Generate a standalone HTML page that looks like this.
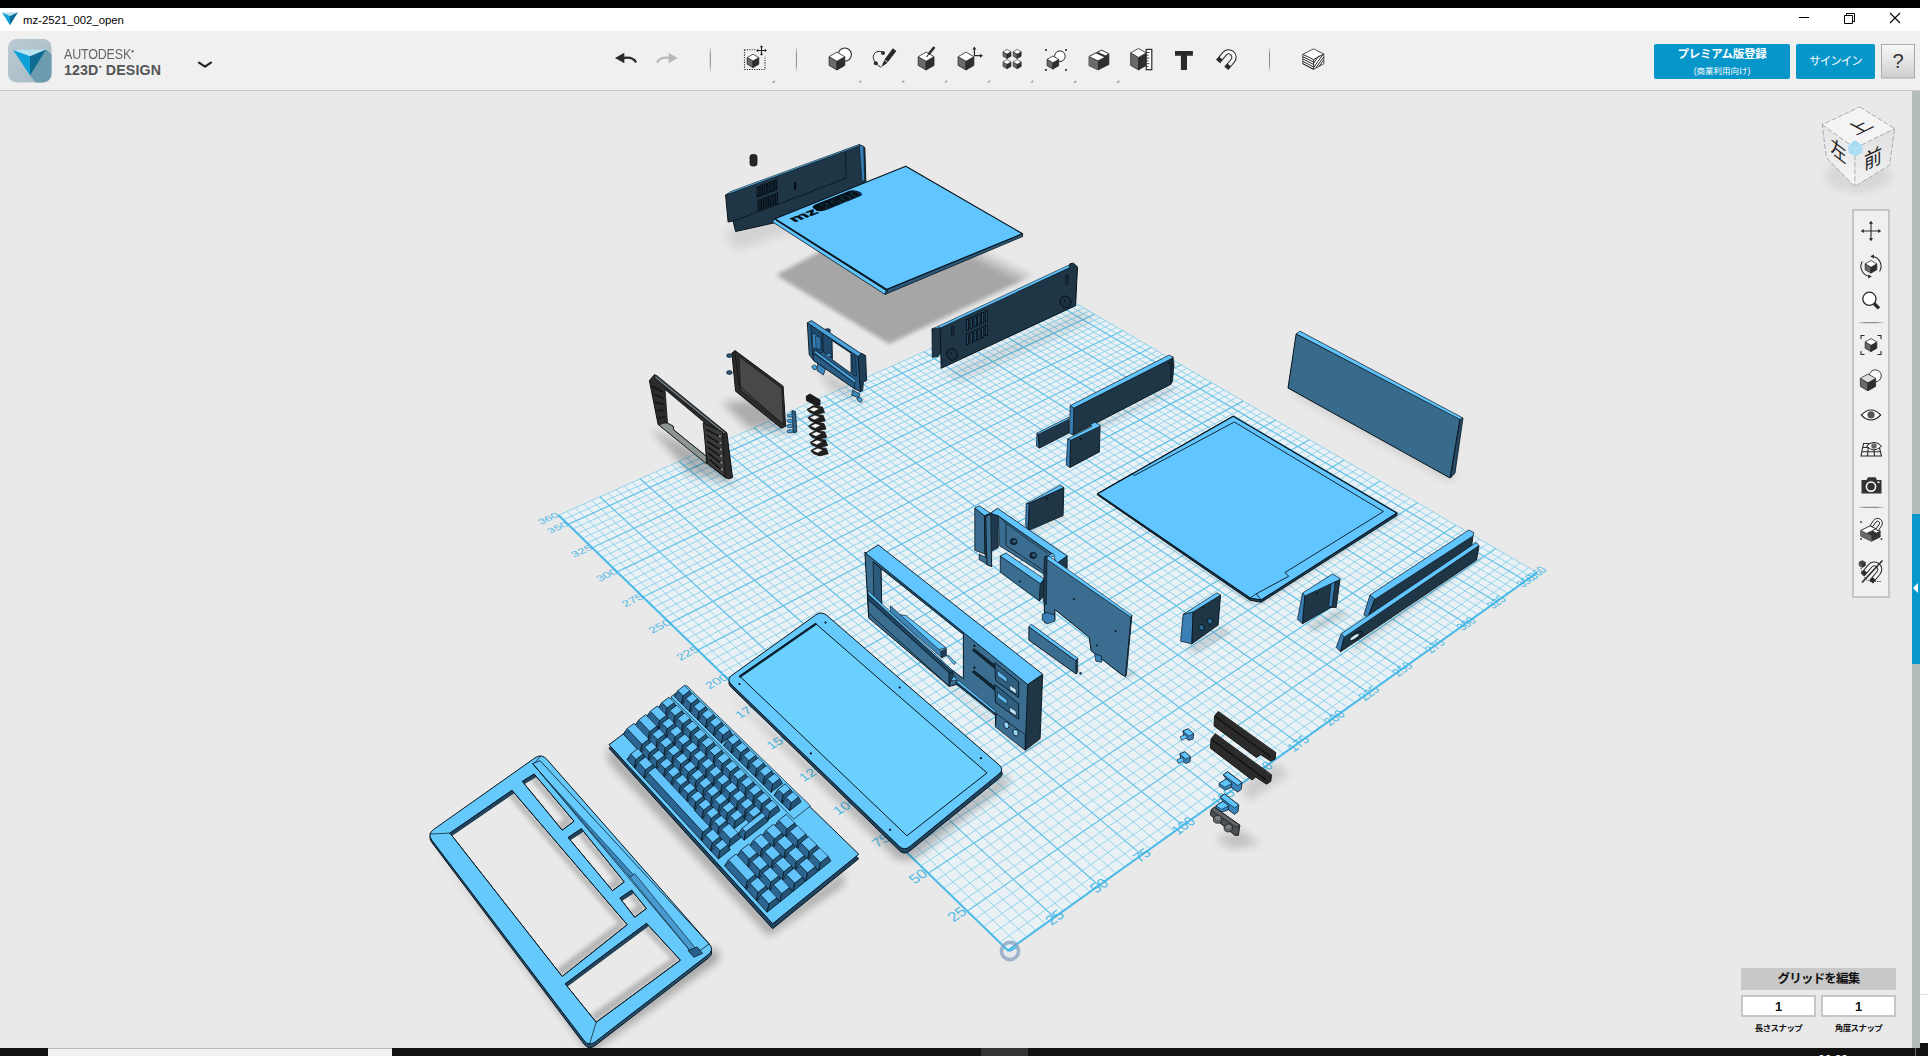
<!DOCTYPE html>
<html lang="ja"><head><meta charset="utf-8"><title>mz-2521_002_open</title>
<style>
html,body{margin:0;padding:0;background:#fff;overflow:hidden}
body{width:1928px;height:1056px;position:relative;font-family:"Liberation Sans","Noto Sans CJK JP",sans-serif}
.abs{position:absolute}
#topblack{left:0;top:0;width:1920px;height:8px;background:#000}
#titlebar{left:0;top:8px;width:1920px;height:23px;background:#fff}
#title{left:23px;top:13.4px;font-size:11.35px;color:#000;white-space:nowrap;line-height:14px}
#toolbar{left:0;top:31px;width:1920px;height:59px;background:#f0f0f0;border-bottom:1px solid #c9c9c9}
#canvas{left:0;top:91px;width:1912px;height:957px;background:#e9e9e9;overflow:hidden}
#scroll{left:1912px;top:91px;width:8px;height:957px;background:#b4bcbc}
#scrollblue{left:1912px;top:514px;width:8px;height:150px;background:#0899cc}
#bottom{left:0;top:1048px;width:1928px;height:8px;background:#111}
#brc{left:1920px;top:1043px;width:8px;height:13px;background:#111}
#tasklight{left:48px;top:1048px;width:344px;height:8px;background:#f0f0f0;border-top:1px solid #bbb;box-sizing:border-box}
#taskmid{left:981px;top:1048px;width:47px;height:8px;background:#333}
.btn{background:#0696c9;border-radius:2px;color:#fff;text-align:center;font-weight:bold}
</style></head><body>
<div class="abs" id="topblack"></div>
<div class="abs" id="titlebar"></div>
<div class="abs" id="title">mz-2521_002_open</div>
<div class="abs" id="toolbar"></div>
<div class="abs" id="canvas"></div>
<div class="abs" id="scroll"></div>
<div class="abs" id="scrollblue"></div>
<div class="abs" id="bottom"></div>
<div class="abs" id="brc"></div>
<div class="abs" id="tasklight"></div>
<div class="abs" id="taskmid"></div>
<svg class="abs" id="scene" style="left:0;top:0" width="1928" height="1056" viewBox="0 0 1928 1056">
<defs>
<clipPath id="cv"><rect x="0" y="91" width="1912" height="957"/></clipPath>
<filter id="b2" x="-20%" y="-20%" width="140%" height="140%"><feGaussianBlur stdDeviation="2"/></filter>
<filter id="b4" x="-20%" y="-20%" width="140%" height="140%"><feGaussianBlur stdDeviation="4"/></filter>
<filter id="b6" x="-20%" y="-20%" width="140%" height="140%"><feGaussianBlur stdDeviation="6"/></filter>
</defs>
<g clip-path="url(#cv)">
<polygon points="1008,950.4 1537,572.6 1056.8,292.3 558.6,515.3" fill="#e8f1f5" opacity="0.92"/>
<path d="M1017.4 943.6L567 511.6M999.7 942.3L1528.7 567.7M1026.8 937L575.3 507.8M991.5 934.4L1520.3 562.9M1036 930.4L583.5 504.1M983.4 926.5L1512.1 558.1M1045.2 923.8L591.8 500.5M975.3 918.7L1503.9 553.3M1063.3 910.9L608.1 493.2M959.4 903.2L1487.6 543.8M1072.3 904.5L616.1 489.5M951.5 895.6L1479.6 539.1M1081.2 898.1L624.2 485.9M943.7 888.1L1471.6 534.4M1090.1 891.8L632.2 482.4M936 880.6L1463.7 529.8M1107.5 879.3L648 475.3M920.8 865.9L1448 520.7M1116.2 873.2L655.9 471.8M913.3 858.6L1440.3 516.1M1124.7 867L663.7 468.3M905.8 851.4L1432.6 511.7M1133.2 861L671.4 464.8M898.4 844.3L1424.9 507.2M1150.1 848.9L686.8 457.9M883.9 830.2L1409.8 498.4M1158.4 843L694.4 454.5M876.7 823.2L1402.3 494M1166.6 837.1L702 451.1M869.5 816.3L1394.9 489.6M1174.8 831.3L709.6 447.7M862.5 809.5L1387.5 485.3M1191 819.7L724.5 441M848.5 796L1372.8 476.8M1199.1 814L731.9 437.7M841.6 789.3L1365.6 472.6M1207 808.3L739.3 434.4M834.8 782.7L1358.4 468.4M1214.9 802.6L746.7 431.1M828 776.1L1351.3 464.2M1230.6 791.5L761.2 424.6M814.7 763.2L1337.1 455.9M1238.3 786L768.4 421.4M808 756.8L1330.1 451.8M1246 780.5L775.6 418.2M801.5 750.4L1323.2 447.8M1253.6 775L782.8 415M795 744.1L1316.3 443.8M1268.7 764.3L796.9 408.6M782.2 731.7L1302.6 435.8M1276.1 758.9L803.9 405.5M775.8 725.6L1295.8 431.8M1283.6 753.6L810.9 402.4M769.5 719.5L1289.1 427.9M1290.9 748.4L817.9 399.2M763.3 713.5L1282.4 424M1305.5 738L831.7 393.1M751 701.5L1269.1 416.2M1312.7 732.8L838.5 390M744.9 695.6L1262.6 412.4M1319.8 727.7L845.3 387M738.8 689.8L1256 408.6M1327 722.6L852.1 383.9M732.9 684L1249.6 404.8M1341 712.6L865.5 377.9M721 672.5L1236.7 397.3M1348 707.6L872.1 375M715.2 666.9L1230.4 393.6M1354.9 702.7L878.8 372M709.4 661.2L1224.1 389.9M1361.8 697.8L885.3 369M703.6 655.7L1217.8 386.3M1375.4 688.1L898.4 363.2M692.2 644.6L1205.4 379M1382.1 683.2L904.9 360.3M686.6 639.2L1199.2 375.4M1388.8 678.5L911.4 357.4M681 633.8L1193.1 371.9M1395.5 673.7L917.8 354.5M675.4 628.4L1187 368.3M1408.6 664.3L930.5 348.8M664.5 617.8L1174.9 361.3M1415.1 659.7L936.8 346M659 612.5L1169 357.8M1421.6 655L943.1 343.2M653.7 607.3L1163 354.3M1428 650.5L949.4 340.4M648.3 602.2L1157.1 350.9M1440.8 641.4L961.8 334.8M637.8 591.9L1145.5 344.1M1447.1 636.9L968 332.1M632.5 586.9L1139.7 340.7M1453.4 632.4L974.1 329.3M627.4 581.9L1133.9 337.3M1459.6 627.9L980.2 326.6M622.2 576.9L1128.2 334M1471.9 619.1L992.3 321.2M612 567L1116.8 327.4M1478 614.8L998.3 318.5M607 562.2L1111.2 324.1M1484.1 610.4L1004.3 315.8M602 557.3L1105.6 320.8M1490.1 606.1L1010.2 313.1M597 552.5L1100.1 317.6M1502.1 597.6L1022 307.8M587.2 543L1089.1 311.1M1508 593.4L1027.9 305.2M582.4 538.3L1083.6 308M1513.9 589.2L1033.7 302.6M577.5 533.6L1078.2 304.8M1519.7 585L1039.5 300M572.8 529L1072.8 301.6M1531.3 576.7L1051.1 294.9M563.3 519.8L1062.1 295.4M1537 572.6L1056.8 292.3M558.6 515.3L1056.8 292.3" stroke="#72c8ea" stroke-width="0.85" fill="none" opacity="0.85"/>
<path d="M1008 950.4L558.6 515.3M1008 950.4L1537 572.6M1054.3 917.3L599.9 496.8M967.3 910.9L1495.7 548.5M1098.8 885.5L640.1 478.8M928.3 873.2L1455.8 525.2M1141.7 854.9L679.1 461.3M891.1 837.2L1417.3 502.8M1183 825.5L717.1 444.4M855.5 802.7L1380.1 481M1222.8 797L754 427.8M821.3 769.6L1344.2 460.1M1261.2 769.6L789.9 411.8M788.6 737.9L1309.4 439.7M1298.2 743.2L824.8 396.1M757.1 707.5L1275.7 420.1M1334 717.6L858.8 380.9M726.9 678.2L1243.1 401.1M1368.6 692.9L891.9 366.1M697.9 650.1L1211.6 382.6M1402.1 669L924.2 351.7M669.9 623.1L1181 364.8M1434.4 645.9L955.6 337.6M643 597L1151.3 347.5M1465.8 623.5L986.3 323.9M617.1 571.9L1122.5 330.7M1496.1 601.8L1016.2 310.5M592.1 547.8L1094.5 314.3M1525.5 580.8L1045.3 297.4M568 524.4L1067.4 298.5" stroke="#55bde6" stroke-width="1.2" fill="none" opacity="0.9"/>
<path d="M558.6,515.3 L1008,950.4 L1537,572.6" stroke="#4dbbe8" stroke-width="2" fill="none"/>
<text transform="matrix(1.814 -1.296 1.677 1.552 1054.3 917.3)" font-size="6.8" text-anchor="middle" y="2.45" fill="#3ab4e6" fill-opacity="0.9" font-family="Liberation Sans,sans-serif">25</text>
<text transform="matrix(1.875 -1.286 1.592 1.541 956.8 913.9)" font-size="6.8" text-anchor="middle" y="2.45" fill="#3ab4e6" fill-opacity="0.9" font-family="Liberation Sans,sans-serif">25</text>
<text transform="matrix(1.746 -1.247 1.686 1.494 1098.8 885.5)" font-size="6.8" text-anchor="middle" y="2.45" fill="#3ab4e6" fill-opacity="0.9" font-family="Liberation Sans,sans-serif">50</text>
<text transform="matrix(1.863 -1.229 1.522 1.473 917.8 876.2)" font-size="6.8" text-anchor="middle" y="2.45" fill="#3ab4e6" fill-opacity="0.9" font-family="Liberation Sans,sans-serif">50</text>
<text transform="matrix(1.682 -1.201 1.692 1.440 1141.7 854.9)" font-size="6.8" text-anchor="middle" y="2.45" fill="#3ab4e6" fill-opacity="0.9" font-family="Liberation Sans,sans-serif">75</text>
<text transform="matrix(1.850 -1.176 1.456 1.410 880.6 840.2)" font-size="6.8" text-anchor="middle" y="2.45" fill="#3ab4e6" fill-opacity="0.9" font-family="Liberation Sans,sans-serif">75</text>
<text transform="matrix(1.621 -1.157 1.697 1.388 1183.0 825.5)" font-size="6.8" text-anchor="middle" y="2.45" fill="#3ab4e6" fill-opacity="0.9" font-family="Liberation Sans,sans-serif">100</text>
<text transform="matrix(1.836 -1.126 1.395 1.350 845.0 805.7)" font-size="6.8" text-anchor="middle" y="2.45" fill="#3ab4e6" fill-opacity="0.9" font-family="Liberation Sans,sans-serif">100</text>
<text transform="matrix(1.563 -1.116 1.700 1.339 1222.8 797.0)" font-size="6.8" text-anchor="middle" y="2.45" fill="#3ab4e6" fill-opacity="0.9" font-family="Liberation Sans,sans-serif">125</text>
<text transform="matrix(1.822 -1.079 1.337 1.294 810.8 772.6)" font-size="6.8" text-anchor="middle" y="2.45" fill="#3ab4e6" fill-opacity="0.9" font-family="Liberation Sans,sans-serif">125</text>
<text transform="matrix(1.508 -1.077 1.702 1.292 1261.2 769.6)" font-size="6.8" text-anchor="middle" y="2.45" fill="#3ab4e6" fill-opacity="0.9" font-family="Liberation Sans,sans-serif">150</text>
<text transform="matrix(1.807 -1.035 1.283 1.242 778.1 740.9)" font-size="6.8" text-anchor="middle" y="2.45" fill="#3ab4e6" fill-opacity="0.9" font-family="Liberation Sans,sans-serif">150</text>
<text transform="matrix(1.456 -1.040 1.703 1.248 1298.2 743.2)" font-size="6.8" text-anchor="middle" y="2.45" fill="#3ab4e6" fill-opacity="0.9" font-family="Liberation Sans,sans-serif">175</text>
<text transform="matrix(1.792 -0.993 1.232 1.193 746.6 710.5)" font-size="6.8" text-anchor="middle" y="2.45" fill="#3ab4e6" fill-opacity="0.9" font-family="Liberation Sans,sans-serif">175</text>
<text transform="matrix(1.407 -1.005 1.703 1.206 1334.0 717.6)" font-size="6.8" text-anchor="middle" y="2.45" fill="#3ab4e6" fill-opacity="0.9" font-family="Liberation Sans,sans-serif">200</text>
<text transform="matrix(1.777 -0.954 1.184 1.146 716.4 681.2)" font-size="6.8" text-anchor="middle" y="2.45" fill="#3ab4e6" fill-opacity="0.9" font-family="Liberation Sans,sans-serif">200</text>
<text transform="matrix(1.360 -0.971 1.701 1.166 1368.6 692.9)" font-size="6.8" text-anchor="middle" y="2.45" fill="#3ab4e6" fill-opacity="0.9" font-family="Liberation Sans,sans-serif">225</text>
<text transform="matrix(1.762 -0.917 1.139 1.102 687.4 653.1)" font-size="6.8" text-anchor="middle" y="2.45" fill="#3ab4e6" fill-opacity="0.9" font-family="Liberation Sans,sans-serif">225</text>
<text transform="matrix(1.316 -0.939 1.699 1.129 1402.1 669.0)" font-size="6.8" text-anchor="middle" y="2.45" fill="#3ab4e6" fill-opacity="0.9" font-family="Liberation Sans,sans-serif">250</text>
<text transform="matrix(1.746 -0.883 1.096 1.061 659.4 626.1)" font-size="6.8" text-anchor="middle" y="2.45" fill="#3ab4e6" fill-opacity="0.9" font-family="Liberation Sans,sans-serif">250</text>
<text transform="matrix(1.273 -0.909 1.697 1.092 1434.4 645.9)" font-size="6.8" text-anchor="middle" y="2.45" fill="#3ab4e6" fill-opacity="0.9" font-family="Liberation Sans,sans-serif">275</text>
<text transform="matrix(1.731 -0.850 1.056 1.022 632.5 600.0)" font-size="6.8" text-anchor="middle" y="2.45" fill="#3ab4e6" fill-opacity="0.9" font-family="Liberation Sans,sans-serif">275</text>
<text transform="matrix(1.233 -0.880 1.693 1.058 1465.8 623.5)" font-size="6.8" text-anchor="middle" y="2.45" fill="#3ab4e6" fill-opacity="0.9" font-family="Liberation Sans,sans-serif">300</text>
<text transform="matrix(1.715 -0.819 1.018 0.985 606.6 574.9)" font-size="6.8" text-anchor="middle" y="2.45" fill="#3ab4e6" fill-opacity="0.9" font-family="Liberation Sans,sans-serif">300</text>
<text transform="matrix(1.195 -0.853 1.689 1.025 1496.1 601.8)" font-size="6.8" text-anchor="middle" y="2.45" fill="#3ab4e6" fill-opacity="0.9" font-family="Liberation Sans,sans-serif">325</text>
<text transform="matrix(1.700 -0.790 0.981 0.950 581.6 550.8)" font-size="6.8" text-anchor="middle" y="2.45" fill="#3ab4e6" fill-opacity="0.9" font-family="Liberation Sans,sans-serif">325</text>
<text transform="matrix(1.158 -0.827 1.685 0.994 1525.5 580.8)" font-size="6.8" text-anchor="middle" y="2.45" fill="#3ab4e6" fill-opacity="0.9" font-family="Liberation Sans,sans-serif">350</text>
<text transform="matrix(1.684 -0.762 0.947 0.917 557.5 527.4)" font-size="6.8" text-anchor="middle" y="2.45" fill="#3ab4e6" fill-opacity="0.9" font-family="Liberation Sans,sans-serif">350</text>
<text transform="matrix(1.144 -0.817 1.683 0.982 1537.0 572.6)" font-size="6.8" text-anchor="middle" y="2.45" fill="#3ab4e6" fill-opacity="0.9" font-family="Liberation Sans,sans-serif">360</text>
<text transform="matrix(1.678 -0.751 0.934 0.904 548.1 518.3)" font-size="6.8" text-anchor="middle" y="2.45" fill="#3ab4e6" fill-opacity="0.9" font-family="Liberation Sans,sans-serif">360</text>
<polygon points="725,232 790,212 800,228 735,250" fill="#000" opacity="0.1" filter="url(#b6)"/>
<polygon points="722,402 762,400 792,432 748,428" fill="#000" opacity="0.26" filter="url(#b4)"/>
<polygon points="650,428 700,452 738,485 690,474" fill="#000" opacity="0.26" filter="url(#b4)"/>
<polygon points="815,365 850,385 868,405 830,390" fill="#000" opacity="0.14" filter="url(#b4)"/>
<polygon points="945,372 1080,310 1095,318 960,382" fill="#000" opacity="0.1" filter="url(#b4)"/>
<polygon points="1290,392 1446,480 1460,478 1300,388" fill="#000" opacity="0.12" filter="url(#b4)"/>
<rect x="750" y="154.5" width="7" height="11.5" rx="2.5" fill="#262626" stroke="#111" stroke-width="0.8"/>
<polygon points="725.6,195 859.4,144.8 864.8,147.5 866,186 778,222 735.6,231.5 733.1,221 728.1,222" fill="#1f3646" stroke="#08141c" stroke-width="1" stroke-linejoin="round" />
<polygon points="725.6,195 730.5,191.6 860,144.2 859.4,145.8" fill="#61c5ff" stroke="#08141c" stroke-width="0.6" stroke-linejoin="round" />
<polygon points="859.4,145.2 863.6,146.2 864.6,180.5 861.9,181.6" fill="#3a7fb5" stroke="#08141c" stroke-width="0.6" stroke-linejoin="round" />
<polyline points="733.1,221 780,203.8 846,178 845.6,152.5" fill="none" stroke="#08141c" stroke-width="0.8" stroke-linejoin="round" stroke-linecap="round" />
<polygon points="757.2,186.8 759.3,186 759.3,196.4 757.2,197.2" fill="#16283a" stroke="#03080c" stroke-width="0.8" stroke-linejoin="round" />
<polygon points="760.7,185.5 762.8,184.7 762.8,195.1 760.7,195.9" fill="#16283a" stroke="#03080c" stroke-width="0.8" stroke-linejoin="round" />
<polygon points="764.2,184.2 766.3,183.4 766.3,193.8 764.2,194.6" fill="#16283a" stroke="#03080c" stroke-width="0.8" stroke-linejoin="round" />
<polygon points="767.7,182.9 769.8,182.1 769.8,192.5 767.7,193.3" fill="#16283a" stroke="#03080c" stroke-width="0.8" stroke-linejoin="round" />
<polygon points="771.2,181.6 773.3,180.8 773.3,191.2 771.2,192" fill="#16283a" stroke="#03080c" stroke-width="0.8" stroke-linejoin="round" />
<polygon points="774.7,180.3 776.8,179.5 776.8,189.9 774.7,190.7" fill="#16283a" stroke="#03080c" stroke-width="0.8" stroke-linejoin="round" />
<polygon points="758,200.3 760.1,199.5 760.1,209.9 758,210.7" fill="#16283a" stroke="#03080c" stroke-width="0.8" stroke-linejoin="round" />
<polygon points="761.5,199 763.6,198.2 763.6,208.6 761.5,209.4" fill="#16283a" stroke="#03080c" stroke-width="0.8" stroke-linejoin="round" />
<polygon points="765,197.7 767.1,196.9 767.1,207.3 765,208.1" fill="#16283a" stroke="#03080c" stroke-width="0.8" stroke-linejoin="round" />
<polygon points="768.5,196.4 770.6,195.6 770.6,206 768.5,206.8" fill="#16283a" stroke="#03080c" stroke-width="0.8" stroke-linejoin="round" />
<polygon points="772,195.1 774.1,194.3 774.1,204.7 772,205.5" fill="#16283a" stroke="#03080c" stroke-width="0.8" stroke-linejoin="round" />
<polygon points="775.5,193.8 777.6,193 777.6,203.4 775.5,204.2" fill="#16283a" stroke="#03080c" stroke-width="0.8" stroke-linejoin="round" />
<rect x="794" y="182" width="2.2" height="7.5" fill="#050b10"/>
<linearGradient id="tsg" gradientUnits="userSpaceOnUse" x1="996.5" y1="273.6" x2="1004.3" y2="257.4"><stop offset="0" stop-color="#a6a6a6"/><stop offset="1" stop-color="#a6a6a6" stop-opacity="0"/></linearGradient>
<polygon points="776,275 913,202 1036,274 889,344" fill="url(#tsg)" filter="url(#b2)"/>
<polygon points="772.5,221.9 775,218.8 886.9,289.4 885,294.4" fill="#61c5ff" stroke="#08141c" stroke-width="0.8" stroke-linejoin="round" />
<polygon points="885,294.4 886.9,289.4 1022.5,233.7 1022.7,236.5" fill="#2b5a7c" stroke="#08141c" stroke-width="0.8" stroke-linejoin="round" />
<polygon points="775,218.8 905.8,166.3 1022.5,233.7 886.9,289.4" fill="#61c5ff" stroke="#08141c" stroke-width="1.2" stroke-linejoin="round" />
<polyline points="776.5,220.3 887.5,291" fill="none" stroke="#08141c" stroke-width="1.2" stroke-linejoin="round" stroke-linecap="round" />
<g transform="matrix(0.93 -0.375 0.55 0.35 794.5 222.5)"><rect x="27" y="-17" width="46" height="17" rx="6" fill="#061018"/><text x="0" y="0" font-size="19" font-weight="bold" font-family="Liberation Sans,sans-serif" fill="#061018" stroke="#061018" stroke-width="0.8">mz-<tspan fill="#163040">2500</tspan></text></g>
<polygon points="932,328.8 940.3,327 940.5,353 938,356.5 932.3,357.3" fill="#1f3646" stroke="#08141c" stroke-width="0.8" stroke-linejoin="round" />
<polygon points="940.2,327.5 1069,267.5 1070,263.8 1073.5,263.2 1077.5,266.9 1075.6,305.6 941.2,368.3" fill="#1f3646" stroke="#08141c" stroke-width="1" stroke-linejoin="round" />
<polygon points="937.5,326.6 1069,265 1069.5,267.6 940.2,328" fill="#61c5ff" stroke="#08141c" stroke-width="0.6" stroke-linejoin="round" />
<polygon points="932,328.8 937.5,326.6 940.2,328" fill="#61c5ff" stroke="#08141c" stroke-width="0.5" stroke-linejoin="round" />
<ellipse cx="951.9" cy="354.4" rx="5.2" ry="6" fill="#1c3242" stroke="#050b10" stroke-width="0.8" transform="rotate(-25 951.9 354.4)"/>
<circle cx="951.1" cy="353.4" r="0.8" fill="#050b10"/>
<ellipse cx="1065.6" cy="301.9" rx="5.2" ry="6" fill="#1c3242" stroke="#050b10" stroke-width="0.8" transform="rotate(-25 1065.6 301.9)"/>
<circle cx="1064.8" cy="300.9" r="0.8" fill="#050b10"/>
<rect x="951.6" y="326.5" width="2.2" height="9.5" rx="1" fill="#1a2f3f" stroke="#050b10" stroke-width="0.6"/>
<rect x="1065.8" y="274.5" width="2.2" height="10" rx="1" fill="#1a2f3f" stroke="#050b10" stroke-width="0.6"/>
<rect x="966.3" y="319.5" width="2.3" height="10.5" fill="#234a66" stroke="#050b10" stroke-width="0.8"/>
<rect x="970.1" y="317.8" width="2.3" height="10.5" fill="#234a66" stroke="#050b10" stroke-width="0.8"/>
<rect x="973.9" y="316.0" width="2.3" height="10.5" fill="#234a66" stroke="#050b10" stroke-width="0.8"/>
<rect x="977.7" y="314.2" width="2.3" height="10.5" fill="#234a66" stroke="#050b10" stroke-width="0.8"/>
<rect x="981.5" y="312.5" width="2.3" height="10.5" fill="#234a66" stroke="#050b10" stroke-width="0.8"/>
<rect x="985.3" y="310.8" width="2.3" height="10.5" fill="#234a66" stroke="#050b10" stroke-width="0.8"/>
<rect x="966.3" y="334.0" width="2.3" height="10.5" fill="#234a66" stroke="#050b10" stroke-width="0.8"/>
<rect x="970.1" y="332.2" width="2.3" height="10.5" fill="#234a66" stroke="#050b10" stroke-width="0.8"/>
<rect x="973.9" y="330.5" width="2.3" height="10.5" fill="#234a66" stroke="#050b10" stroke-width="0.8"/>
<rect x="977.7" y="328.8" width="2.3" height="10.5" fill="#234a66" stroke="#050b10" stroke-width="0.8"/>
<rect x="981.5" y="327.0" width="2.3" height="10.5" fill="#234a66" stroke="#050b10" stroke-width="0.8"/>
<rect x="985.3" y="325.2" width="2.3" height="10.5" fill="#234a66" stroke="#050b10" stroke-width="0.8"/>
<polygon points="817.7,362.6 825.8,367.6 823.4,374.9 817,370.6" fill="#3a86bd" stroke="#08141c" stroke-width="0.7" stroke-linejoin="round" />
<polygon points="811.6,366.4 814.4,364.8 817,366.8 816,369.5 813.5,369.7" fill="#4aa3dc" stroke="#08141c" stroke-width="0.6" stroke-linejoin="round" />
<polygon points="852.8,390 859.9,394.1 858.7,397.6 851.7,395.3" fill="#3a86bd" stroke="#08141c" stroke-width="0.7" stroke-linejoin="round" />
<polygon points="856.6,398.1 860.4,397.6 862.4,400 861.3,402.4 858.7,401.7" fill="#4aa3dc" stroke="#08141c" stroke-width="0.6" stroke-linejoin="round" />
<polygon points="858,356.6 861.3,353.1 865.6,355.5 866.7,380.6 863.4,382 862.7,390.5 860.4,391.7" fill="#1f3f58" stroke="#08141c" stroke-width="0.8" stroke-linejoin="round" />
<polygon points="807.3,322.8 858,356.6 860.4,391.7 854.7,388.8 813.5,360.4 809.2,354.5" fill="#2a5d85" stroke="#08141c" stroke-width="0.9" stroke-linejoin="round" />
<polygon points="831.9,340.5 850.9,353.2 851.1,373.3 832.4,359.7" fill="#e9e9e9" stroke="#08141c" stroke-width="0.8" stroke-linejoin="round" />
<polygon points="810.6,324.4 822.5,331.4 823.4,351.9 812.5,355.3" fill="#1f4a6c" stroke="#08141c" stroke-width="0.6" stroke-linejoin="round" />
<polygon points="812.2,332.7 820.6,337.5 821.1,349.8 812.7,347.7" fill="#3a86bd" stroke="#08141c" stroke-width="0.6" stroke-linejoin="round" />
<polygon points="815.4,336.1 820.6,337.5 821.1,349.8 816,348.4" fill="#2f70a2" stroke="#08141c" stroke-width="0.5" stroke-linejoin="round" />
<polygon points="822.5,331.4 831.8,337.5 832.1,357.8 823.4,351.9" fill="#1f4a6c" stroke="#08141c" stroke-width="0.6" stroke-linejoin="round" />
<polygon points="825.3,354.5 829.6,353.8 832.1,355.5 827.7,356.9" fill="#4aa3dc" stroke="#08141c" stroke-width="0.5" stroke-linejoin="round" />
<polygon points="851.8,354.5 855.6,356.9 856.6,376.3 853,375.4" fill="#1f4a6c" stroke="#08141c" stroke-width="0.5" stroke-linejoin="round" />
<rect x="824.8" y="328.8" width="5.6" height="4" rx="1.6" fill="#1f4a6c" stroke="#08141c" stroke-width="0.6"/>
<polygon points="813,353.1 854.7,382.9 854.7,388.8 813.5,360.4" fill="#2a5d85" stroke="#08141c" stroke-width="0.7" stroke-linejoin="round" />
<polygon points="813,351.9 815.7,350.7 856.1,380.3 854.7,382.9" fill="#4aa3dc" stroke="#08141c" stroke-width="0.7" stroke-linejoin="round" />
<polygon points="807.3,322.8 811.6,320.6 861.3,353.8 858,356.6" fill="#4aa3dc" stroke="#08141c" stroke-width="0.8" stroke-linejoin="round" />
<polygon points="731.9,353.1 735,350.6 783.1,386.2 785.6,426.2 781.2,428.1 735.6,391.2" fill="#2c2c2c" stroke="#111" stroke-width="1" stroke-linejoin="round" />
<polygon points="739,356.5 781.9,388.1 783.5,424.4 740.6,390" fill="#4a4847" stroke="#151515" stroke-width="0.8" stroke-linejoin="round" />
<polyline points="735,351.9 738.8,385 780.6,422.5" fill="none" stroke="#111" stroke-width="0.8" stroke-linejoin="round" stroke-linecap="round" />
<ellipse cx="729.4" cy="355.6" rx="2.8" ry="1.9" fill="#2a5a80" stroke="#0b1a24" stroke-width="0.7"/>
<ellipse cx="729.4" cy="372.5" rx="2.8" ry="1.9" fill="#2a5a80" stroke="#0b1a24" stroke-width="0.7"/>
<polygon points="791.9,410.6 795.6,411.5 796.9,431.9 793.1,433.1" fill="#2d6187" stroke="#08141c" stroke-width="0.7" stroke-linejoin="round" />
<ellipse cx="790.0" cy="415.6" rx="3" ry="1.6" fill="#4aa3dc" stroke="#08141c" stroke-width="0.6"/>
<ellipse cx="790.0" cy="420.9" rx="3" ry="1.6" fill="#4aa3dc" stroke="#08141c" stroke-width="0.6"/>
<ellipse cx="790.0" cy="426.1" rx="3" ry="1.6" fill="#4aa3dc" stroke="#08141c" stroke-width="0.6"/>
<ellipse cx="790.0" cy="431.4" rx="3" ry="1.6" fill="#4aa3dc" stroke="#08141c" stroke-width="0.6"/>
<polygon points="649.4,380.6 654.4,374.8 726.9,433.1 732.5,477.5 728.8,478.8 725,477.5 710,465.6 658.1,424.4" fill="#2b2b2b" stroke="#101010" stroke-width="1" stroke-linejoin="round" />
<polygon points="665,389.4 703.8,421.9 706.2,456.2 673.8,430 673.1,426.2 667.5,423.1" fill="#e9e9e9" stroke="#101010" stroke-width="0.8" stroke-linejoin="round" />
<polygon points="663.8,423.1 667.5,423.1 673.1,426.2 673.8,430 706.2,456.2 706.5,463.8 658.8,425" fill="#8d9494" stroke="#101010" stroke-width="0.8" stroke-linejoin="round" />
<polygon points="654.4,374.8 656.9,375.6 726.2,432.2 726.9,433.1 723.1,433.8 655,378.8" fill="#3c4346" stroke="#101010" stroke-width="0.7" stroke-linejoin="round" />
<polyline points="655.6,377.2 724,432.8" fill="none" stroke="#9aa7ad" stroke-width="0.8" stroke-linejoin="round" stroke-linecap="round" />
<polygon points="703.1,423.1 722.5,431.9 725,476.9 707.5,463.8" fill="#3a3a3a" stroke="#101010" stroke-width="0.8" stroke-linejoin="round" />
<polyline points="706.4,429.7 718,435.7" fill="none" stroke="#111" stroke-width="1.5" stroke-linejoin="round" stroke-linecap="round" />
<circle cx="720.0" cy="436.2" r="0.9" fill="#9aa"/>
<polyline points="707,435.6 718.4,442.3" fill="none" stroke="#111" stroke-width="1.5" stroke-linejoin="round" stroke-linecap="round" />
<circle cx="720.4" cy="442.8" r="0.9" fill="#9aa"/>
<polyline points="707.7,441.6 718.8,448.9" fill="none" stroke="#111" stroke-width="1.5" stroke-linejoin="round" stroke-linecap="round" />
<circle cx="720.8" cy="449.4" r="0.9" fill="#9aa"/>
<polyline points="708.3,447.6 719.1,455.5" fill="none" stroke="#111" stroke-width="1.5" stroke-linejoin="round" stroke-linecap="round" />
<circle cx="721.1" cy="456.0" r="0.9" fill="#9aa"/>
<polyline points="709,453.6 719.5,462.1" fill="none" stroke="#111" stroke-width="1.5" stroke-linejoin="round" stroke-linecap="round" />
<circle cx="721.5" cy="462.6" r="0.9" fill="#9aa"/>
<polyline points="709.6,459.5 719.9,468.8" fill="none" stroke="#111" stroke-width="1.5" stroke-linejoin="round" stroke-linecap="round" />
<circle cx="721.9" cy="469.3" r="0.9" fill="#9aa"/>
<polyline points="652.2,386.2 662.5,391.8" fill="none" stroke="#151515" stroke-width="1.6" stroke-linejoin="round" stroke-linecap="round" />
<polyline points="653.8,394.3 662.9,398" fill="none" stroke="#151515" stroke-width="1.6" stroke-linejoin="round" stroke-linecap="round" />
<polyline points="655.4,402.4 663.4,404.2" fill="none" stroke="#151515" stroke-width="1.6" stroke-linejoin="round" stroke-linecap="round" />
<polyline points="657,410.5 663.9,410.5" fill="none" stroke="#151515" stroke-width="1.6" stroke-linejoin="round" stroke-linecap="round" />
<polyline points="658.7,418.6 664.3,416.8" fill="none" stroke="#151515" stroke-width="1.6" stroke-linejoin="round" stroke-linecap="round" />
<polygon points="806.2,396.2 810,394 820,400 820,405.2 816.2,405.6 806.5,400.6" fill="#1c1c1c" stroke="#0a0a0a" stroke-width="0.8" stroke-linejoin="round" />
<polygon points="807,409.4 813.5,405.6 822.5,407.1 824.5,412.5 816,414.6 809.8,412.5" fill="#202020" stroke="#0a0a0a" stroke-width="0.7" stroke-linejoin="round" />
<polygon points="808.5,409.4 814.1,406.9 819.5,408.8 813.8,411.9" fill="#f4f6f6" stroke="#0a0a0a" stroke-width="0.6" stroke-linejoin="round" />
<polygon points="807.8,417.6 814.2,413.9 823.2,415.4 825.2,420.8 816.8,422.9 810.5,420.8" fill="#202020" stroke="#0a0a0a" stroke-width="0.7" stroke-linejoin="round" />
<polygon points="809.2,417.6 814.9,415.1 820.2,417 814.5,420.1" fill="#f4f6f6" stroke="#0a0a0a" stroke-width="0.6" stroke-linejoin="round" />
<polygon points="808.5,425.9 815,422.1 824,423.6 826,429 817.5,431.1 811.2,429" fill="#202020" stroke="#0a0a0a" stroke-width="0.7" stroke-linejoin="round" />
<polygon points="810,425.9 815.6,423.4 821,425.2 815.2,428.4" fill="#f4f6f6" stroke="#0a0a0a" stroke-width="0.6" stroke-linejoin="round" />
<polygon points="809.2,434.1 815.8,430.4 824.8,431.9 826.8,437.2 818.2,439.4 812,437.2" fill="#202020" stroke="#0a0a0a" stroke-width="0.7" stroke-linejoin="round" />
<polygon points="810.8,434.1 816.4,431.6 821.8,433.5 816,436.6" fill="#f4f6f6" stroke="#0a0a0a" stroke-width="0.6" stroke-linejoin="round" />
<polygon points="810,442.4 816.5,438.6 825.5,440.1 827.5,445.5 819,447.6 812.8,445.5" fill="#202020" stroke="#0a0a0a" stroke-width="0.7" stroke-linejoin="round" />
<polygon points="811.5,442.4 817.1,439.9 822.5,441.8 816.8,444.9" fill="#f4f6f6" stroke="#0a0a0a" stroke-width="0.6" stroke-linejoin="round" />
<polygon points="810.8,450.6 817.2,446.9 826.2,448.4 828.2,453.8 819.8,455.9 813.5,453.8" fill="#202020" stroke="#0a0a0a" stroke-width="0.7" stroke-linejoin="round" />
<polygon points="812.2,450.6 817.9,448.1 823.2,450 817.5,453.1" fill="#f4f6f6" stroke="#0a0a0a" stroke-width="0.6" stroke-linejoin="round" />
<polygon points="1075,436.2 1171.2,386.2 1177.5,389.4 1080,440" fill="#000" opacity="0.12" filter="url(#b2)"/>
<polygon points="1036.9,433.1 1038.1,434.4 1039.4,448.1 1036.5,446.2" fill="#3a7fb5" stroke="#08141c" stroke-width="0.7" stroke-linejoin="round" />
<polygon points="1038.1,434.4 1068.8,419.4 1068.8,433.1 1039.4,448.1" fill="#1f3646" stroke="#08141c" stroke-width="0.9" stroke-linejoin="round" />
<polygon points="1036.9,433.1 1068.8,417.2 1068.8,419.4 1038.1,434.4" fill="#61c5ff" stroke="#08141c" stroke-width="0.7" stroke-linejoin="round" />
<polygon points="1171.2,358.8 1173.1,356.9 1174,365 1172.5,381.2 1170.6,384.4" fill="#1a2f3f" stroke="#08141c" stroke-width="0.7" stroke-linejoin="round" />
<polygon points="1073.8,408.1 1171.2,358.8 1170.6,384.4 1073.1,435" fill="#1f3646" stroke="#08141c" stroke-width="0.9" stroke-linejoin="round" />
<polygon points="1070.2,405.6 1168.8,355.2 1173.1,356.9 1171.2,358.8 1073.8,408.1" fill="#61c5ff" stroke="#08141c" stroke-width="0.7" stroke-linejoin="round" />
<polygon points="1070.2,405.6 1073.8,408.1 1073.1,435 1069.4,433.1" fill="#3a7fb5" stroke="#08141c" stroke-width="0.7" stroke-linejoin="round" />
<circle cx="1168.8" cy="363.1" r="0.9" fill="#050b10"/>
<polygon points="1067.8,438.8 1070.6,440 1070,467.5 1066.2,465" fill="#3a7fb5" stroke="#08141c" stroke-width="0.7" stroke-linejoin="round" />
<polygon points="1070.6,440 1100,425.6 1099.4,451.9 1070,467.5" fill="#1f3646" stroke="#08141c" stroke-width="0.9" stroke-linejoin="round" />
<polygon points="1067.8,438.8 1091.9,426.5 1090.6,424.4 1095,422.1 1100.6,425.6 1100,426.2 1070.6,440.2" fill="#61c5ff" stroke="#08141c" stroke-width="0.7" stroke-linejoin="round" />
<circle cx="1081.0" cy="439.0" r="0.9" fill="#050b10"/>
<polygon points="1460,418.8 1463,418 1455,473 1450.5,478" fill="#244a68" stroke="#08141c" stroke-width="0.8" stroke-linejoin="round" />
<polygon points="1296.2,333.8 1460,418.8 1450,478 1288,388" fill="#386a8c" stroke="#08141c" stroke-width="1" stroke-linejoin="round" />
<polygon points="1296.2,333.8 1300,331.2 1463,418 1460,419.5" fill="#61c5ff" stroke="#08141c" stroke-width="0.7" stroke-linejoin="round" />
<polygon points="1100,497 1250,602 1262,604 1400,516 1396,512 1258,596" fill="#000" opacity="0.18" filter="url(#b2)"/>
<polygon points="1097.5,495 1250,600.2 1261.2,602.2 1396.9,515.3 1396.9,513.1 1233.2,416.2 1097.5,493.8" fill="#1f4560" stroke="#08141c" stroke-width="1" stroke-linejoin="round" />
<polygon points="1233.2,416.2 1396.9,513.1 1261.2,600 1250,598 1097.5,493.8" fill="#61c5ff" stroke="#08141c" stroke-width="1.2" stroke-linejoin="round" />
<polyline points="1102,491 1132.5,473.5 1134.2,475.6 1234.3,422 1383.5,511.5 1285,572.5 1288.7,576.3 1256.3,593.8 1261.2,600" fill="none" stroke="#08141c" stroke-width="0.9" stroke-linejoin="round" stroke-linecap="round" />
<polyline points="1250,598 1256.3,593.8" fill="none" stroke="#08141c" stroke-width="0.8" stroke-linejoin="round" stroke-linecap="round" />
<polygon points="1030,531.2 1063.8,516.2 1067.5,518.1 1032.5,533.8" fill="#000" opacity="0.12" filter="url(#b2)"/>
<polygon points="1026.2,503.8 1029.4,503.1 1028.1,530.6 1025.6,525" fill="#3a7fb5" stroke="#08141c" stroke-width="0.7" stroke-linejoin="round" />
<polygon points="1029.4,503.1 1063.8,487.5 1063.1,515.6 1028.1,530.6" fill="#1f3646" stroke="#08141c" stroke-width="0.9" stroke-linejoin="round" />
<polygon points="1026.2,503.8 1060.6,485 1063.8,487.5 1029.4,503.1" fill="#61c5ff" stroke="#08141c" stroke-width="0.7" stroke-linejoin="round" />
<circle cx="1046.9" cy="498.5" r="0.9" fill="#050b10"/>
<polygon points="1186,648 1220,626 1232,632 1196,654" fill="#000" opacity="0.12" filter="url(#b2)"/>
<polygon points="1183.1,614.4 1193.1,611.9 1191.9,643.8 1180.6,641.2" fill="#3a7fb5" stroke="#08141c" stroke-width="0.7" stroke-linejoin="round" />
<polygon points="1193.1,611.9 1220.6,595 1218.1,625 1191.9,643.8" fill="#1f3646" stroke="#08141c" stroke-width="0.9" stroke-linejoin="round" />
<polygon points="1183.1,614.4 1216.9,592.8 1220.6,595 1193.1,611.9" fill="#61c5ff" stroke="#08141c" stroke-width="0.7" stroke-linejoin="round" />
<ellipse cx="1201.5" cy="627.5" rx="2.6" ry="3" fill="#2a6795" stroke="#050b10" stroke-width="0.8" transform="rotate(-30 1201.5 627.5)"/>
<ellipse cx="1210.0" cy="621.2" rx="2.6" ry="3" fill="#2a6795" stroke="#050b10" stroke-width="0.8" transform="rotate(-30 1210.0 621.2)"/>
<circle cx="1203.5" cy="607.5" r="0.8" fill="#050b10"/>
<polygon points="1305,626 1338,609 1350,614 1315,632" fill="#000" opacity="0.12" filter="url(#b2)"/>
<polygon points="1302.5,593.1 1305,595.6 1302.5,623.8 1297.5,619.4" fill="#3a7fb5" stroke="#08141c" stroke-width="0.7" stroke-linejoin="round" />
<polygon points="1305,595.6 1334.4,581.9 1330.6,607.5 1302.5,623.8" fill="#1f3646" stroke="#08141c" stroke-width="0.9" stroke-linejoin="round" />
<polygon points="1334.4,581.9 1340,579.4 1336.2,607.5 1330.6,607.5" fill="#1f3646" stroke="#08141c" stroke-width="0.8" stroke-linejoin="round" />
<polygon points="1331.2,583.1 1335,581.9 1331.9,606.9 1328.8,606.2" fill="#3a7fb5" stroke="#08141c" stroke-width="0.6" stroke-linejoin="round" />
<polygon points="1302.5,593.1 1332.5,574 1340.6,578.8 1340,579.6 1334.4,582.1 1305,595.9" fill="#61c5ff" stroke="#08141c" stroke-width="0.7" stroke-linejoin="round" />
<circle cx="1316.9" cy="593.1" r="0.8" fill="#050b10"/>
<polygon points="1372.5,618.8 1472.5,552.5 1482.5,557.5 1350,655" fill="#000" opacity="0.12" filter="url(#b2)"/>
<polygon points="1370,595 1375,598.8 1368,617 1363.8,615" fill="#3a7fb5" stroke="#08141c" stroke-width="0.7" stroke-linejoin="round" />
<polygon points="1375,598.8 1473,535.5 1471.2,550 1368,617" fill="#1f3646" stroke="#08141c" stroke-width="0.9" stroke-linejoin="round" />
<polygon points="1370,595 1468.8,530 1473.8,532.5 1473,536 1375,599.2" fill="#61c5ff" stroke="#08141c" stroke-width="0.7" stroke-linejoin="round" />
<polygon points="1341.2,633.8 1344.5,636.5 1340.5,651.8 1336.2,647.5" fill="#3a7fb5" stroke="#08141c" stroke-width="0.7" stroke-linejoin="round" />
<polygon points="1344.5,636.5 1479,546 1476.5,560 1340.5,651.8" fill="#1f3646" stroke="#08141c" stroke-width="0.9" stroke-linejoin="round" />
<polygon points="1341.2,633.8 1476.2,542.5 1479,545.5 1344.5,637" fill="#61c5ff" stroke="#08141c" stroke-width="0.7" stroke-linejoin="round" />
<ellipse cx="1356" cy="636" rx="7.5" ry="2.6" fill="#203748" stroke="#050b10" stroke-width="0.8" transform="rotate(-33 1356 636)"/>
<ellipse cx="1354.5" cy="637" rx="5.5" ry="1.8" fill="#cfe9f7" stroke="#050b10" stroke-width="0.6" transform="rotate(-33 1354.5 637)"/>
<polygon points="1119.8,674.6 1126.5,679.4 1137,673.6 1132.2,669.8" fill="#000" opacity="0.12" filter="url(#b2)"/>
<polygon points="974.8,508.2 979.2,505.7 990.7,513.3 984.4,515.8" fill="#61c5ff" stroke="#08141c" stroke-width="0.7" stroke-linejoin="round" />
<polygon points="974.8,508.2 984.4,515.8 985,554.1 974.8,550.3" fill="#3a6d90" stroke="#08141c" stroke-width="0.8" stroke-linejoin="round" />
<polygon points="984.4,515.8 990.7,513.3 997.4,509.1 998.3,547.4 991.6,551.2 991.6,566.5 986.9,564.6 985,554.1" fill="#1f3a4e" stroke="#08141c" stroke-width="0.8" stroke-linejoin="round" />
<polygon points="985.9,516.8 990.7,513.9 991.6,566.5 986.9,564.6" fill="#3a6d90" stroke="#08141c" stroke-width="0.7" stroke-linejoin="round" />
<polygon points="979.2,554.1 986.9,557.9 986.9,564.2 979.2,559.8" fill="#3a6d90" stroke="#08141c" stroke-width="0.7" stroke-linejoin="round" />
<polygon points="998.3,515.8 1051.9,554.1 1045.2,556.9 1044.2,574.2 999.3,545.5" fill="#3a6d90" stroke="#08141c" stroke-width="0.8" stroke-linejoin="round" />
<polyline points="1006,523.5 1006,545.5 1043.3,570.3" fill="none" stroke="#08141c" stroke-width="0.7" stroke-linejoin="round" stroke-linecap="round" />
<polyline points="1001.2,518.7 1006,523.5 1047.1,553.1" fill="none" stroke="#08141c" stroke-width="0.6" stroke-linejoin="round" stroke-linecap="round" />
<ellipse cx="1013.6" cy="541.6" rx="3.4" ry="3" fill="#14283a" stroke="#050b10" stroke-width="0.8"/>
<ellipse cx="1014.4" cy="541.3" rx="2" ry="1.8" fill="#2d5a7c"/>
<ellipse cx="1033.2" cy="555.4" rx="3.4" ry="3" fill="#14283a" stroke="#050b10" stroke-width="0.8"/>
<ellipse cx="1034.0" cy="555.1" rx="2" ry="1.8" fill="#2d5a7c"/>
<polygon points="990.7,513.3 997.4,508.2 1067.2,556 1056.7,563.6 1052.9,554.1 998.3,515.8" fill="#61c5ff" stroke="#08141c" stroke-width="0.8" stroke-linejoin="round" />
<polygon points="1052.9,553.1 1046.2,556.9 1047.1,559.2 1054.8,555.4" fill="#61c5ff" stroke="#08141c" stroke-width="0.6" stroke-linejoin="round" />
<polygon points="1056.7,563.6 1067.2,556 1067.2,568.4 1062.4,566.5" fill="#1f3a4e" stroke="#08141c" stroke-width="0.7" stroke-linejoin="round" />
<polygon points="1000.3,556 1040.4,583.7 1039.5,600.9 1000.3,572.2" fill="#3a6d90" stroke="#08141c" stroke-width="0.8" stroke-linejoin="round" />
<polygon points="1000.3,556 1006,553.1 1044.2,578.9 1040.4,583.7" fill="#61c5ff" stroke="#08141c" stroke-width="0.7" stroke-linejoin="round" />
<polygon points="1040.4,583.7 1044.2,578.9 1043.3,597.1 1039.5,600.9" fill="#1f3a4e" stroke="#08141c" stroke-width="0.7" stroke-linejoin="round" />
<circle cx="1020.0" cy="581.4" r="0.9" fill="#050b10"/>
<polygon points="1046.2,558.9 1131.3,617.2 1125.5,676.5 1120.8,674 1091.1,650.7 1089.2,637.3 1054.8,609.5 1054.8,620.1 1044.8,622.9 1044.2,602.9" fill="#3a6d90" stroke="#08141c" stroke-width="1" stroke-linejoin="round" />
<polygon points="1046.2,558.9 1049,556 1131.9,615.3 1131.3,617.6" fill="#61c5ff" stroke="#08141c" stroke-width="0.6" stroke-linejoin="round" />
<polygon points="1131.3,617.2 1131.9,615.3 1126.5,674.6 1125.5,676.5" fill="#2a5272" stroke="#08141c" stroke-width="0.6" stroke-linejoin="round" />
<polygon points="1044.2,556.9 1047.1,556 1046.2,604.8 1043.3,601.9" fill="#1f3a4e" stroke="#08141c" stroke-width="0.6" stroke-linejoin="round" />
<circle cx="1073.9" cy="599.0" r="0.9" fill="#050b10"/>
<circle cx="1115.6" cy="631.2" r="0.9" fill="#050b10"/>
<circle cx="1096.8" cy="645.3" r="0.9" fill="#050b10"/>
<polygon points="1042.3,614.3 1047.1,612.4 1054.8,615.3 1054.8,621 1047.1,623.9 1042.3,620.1" fill="#3a7fb5" stroke="#08141c" stroke-width="0.7" stroke-linejoin="round" />
<polygon points="1094.6,653.5 1101.6,656.4 1101.6,662.1 1095.9,661.2" fill="#3a7fb5" stroke="#08141c" stroke-width="0.7" stroke-linejoin="round" />
<polygon points="1029.9,641.1 1076.8,674.6 1081.5,671.7 1035.6,639.2" fill="#000" opacity="0.12" filter="url(#b2)"/>
<polygon points="1028.9,626.8 1076.2,660.8 1076.2,674 1028.9,640.2" fill="#3a6d90" stroke="#08141c" stroke-width="0.9" stroke-linejoin="round" />
<polygon points="1028.9,626.8 1031.4,624.3 1077.7,658.3 1076.2,660.8" fill="#61c5ff" stroke="#08141c" stroke-width="0.7" stroke-linejoin="round" />
<polygon points="1076.2,660.8 1077.7,658.3 1077.7,671.3 1076.2,674" fill="#1f3a4e" stroke="#08141c" stroke-width="0.6" stroke-linejoin="round" />
<circle cx="1080.6" cy="673.2" r="1.2" fill="#1f3a4e"/>
<polygon points="868,617.5 1025.2,752.2 1041.9,741.2 1039.3,737.3 1025.2,747.6" fill="#000" opacity="0.16" filter="url(#b2)"/>
<polygon points="894.7,614.1 905.9,615.5 946,647.8 936,650.3 902.4,618.8" fill="#61c5ff" stroke="#08141c" stroke-width="0.7" stroke-linejoin="round" />
<polygon points="890.5,605.8 940.7,651.2 941.7,657.9 890.5,612" fill="#3f86b8" stroke="#08141c" stroke-width="0.6" stroke-linejoin="round" />
<polygon points="940.7,651.2 946.4,648.4 946.4,655.5 941.7,657.9" fill="#1f3f58" stroke="#08141c" stroke-width="0.6" stroke-linejoin="round" />
<polygon points="946.4,655.5 949.2,656 955.9,663.1 954,664.5" fill="#61c5ff" stroke="#08141c" stroke-width="0.6" stroke-linejoin="round" />
<path d="M864.9 552.0 L1029.7 683.8 L1025.7 749.7 L995.4 725.5 L995.6 714.7 L956.8 684.4 L949.2 686.3 L868.7 617.9 Z M880.9 568.4 L963.4 634.3 L963.4 678.7 L951.1 669.2 L875.7 604.1 L881.7 604.1 Z" fill="#3a6d90" stroke="#08141c" stroke-width="1" fill-rule="evenodd" stroke-linejoin="round"/>
<polygon points="873.1,561.6 880.9,568.4 881.7,604.1 874,602.9" fill="#2d5a7c" stroke="#08141c" stroke-width="0.7" stroke-linejoin="round" />
<polygon points="873.1,561.6 963.6,632.2 963.6,634.3 880.9,568.6" fill="#2d5a7c" stroke="#08141c" stroke-width="0.5" stroke-linejoin="round" />
<polygon points="868,590.5 951.1,669.2 953,672.6 868,594.3" fill="#5bbcf3" stroke="#08141c" stroke-width="0.6" stroke-linejoin="round" />
<polygon points="868,594.3 953,672.6 949.2,673 868,599.5" fill="#1f4560" stroke="#08141c" stroke-width="0.6" stroke-linejoin="round" />
<polygon points="868,599.5 949.2,673 949.2,686.3 868.8,613.4" fill="#3a6d90" stroke="#08141c" stroke-width="0.8" stroke-linejoin="round" />
<polygon points="949.2,673 953,672.6 954,675.9 951.1,680.6 949.2,686.3" fill="#1f3f58" stroke="#08141c" stroke-width="0.6" stroke-linejoin="round" />
<polygon points="951.1,680.6 954,675.9 956.8,680.6" fill="#5bbcf3" stroke="#08141c" stroke-width="0.5" stroke-linejoin="round" />
<polygon points="955.9,681.6 958.7,680.6 995.6,710.9 995.6,713.8" fill="#5bbcf3" stroke="#08141c" stroke-width="0.6" stroke-linejoin="round" />
<polygon points="955.9,682.5 995.6,713.8 995.5,715.8 956.8,684.6" fill="#1f4560" stroke="#08141c" stroke-width="0.6" stroke-linejoin="round" />
<polygon points="1027.7,684.5 1042.7,674.2 1040.1,738.6 1025.2,750.2" fill="#1f3646" stroke="#08141c" stroke-width="0.9" stroke-linejoin="round" />
<polygon points="865.5,553.1 878.3,544.9 1042.7,674.2 1027.7,684.5" fill="#61c5ff" stroke="#08141c" stroke-width="0.9" stroke-linejoin="round" />
<polygon points="972.4,650.2 974.2,648.7 995.5,665.7 994.5,668.3" fill="#14283a" stroke="#050b10" stroke-width="0.7" stroke-linejoin="round" />
<circle cx="974.4" cy="645.8" r="1.1" fill="#050b10"/>
<polygon points="994.8,662.6 1018.7,681.9 1018.7,697.4 995.5,680.6" fill="#2f5f80" stroke="#050b10" stroke-width="0.8" stroke-linejoin="round" />
<polygon points="997.3,670.3 1007.1,678 1007.1,682.7 997.3,675.5" fill="#5fb6ea" stroke="#050b10" stroke-width="0.6" stroke-linejoin="round" />
<polygon points="1009.7,685 1016.2,689.6 1016.2,694 1009.7,689.6" fill="#bfe6fa" stroke="#050b10" stroke-width="0.6" stroke-linejoin="round" />
<polygon points="972.4,672.1 974.2,670.6 995.5,687.6 994.5,690.2" fill="#14283a" stroke="#050b10" stroke-width="0.7" stroke-linejoin="round" />
<circle cx="974.4" cy="667.7" r="1.1" fill="#050b10"/>
<polygon points="994.8,684.5 1018.7,703.8 1018.7,719.3 995.5,702.5" fill="#2f5f80" stroke="#050b10" stroke-width="0.8" stroke-linejoin="round" />
<polygon points="997.3,692.2 1007.1,699.9 1007.1,704.6 997.3,697.4" fill="#5fb6ea" stroke="#050b10" stroke-width="0.6" stroke-linejoin="round" />
<polygon points="1009.7,706.9 1016.2,711.5 1016.2,715.9 1009.7,711.5" fill="#bfe6fa" stroke="#050b10" stroke-width="0.6" stroke-linejoin="round" />
<polygon points="996.3,713.6 1025.2,734.7 1025.2,750.2 995.5,727" fill="#3a6d90" stroke="#08141c" stroke-width="0.7" stroke-linejoin="round" />
<ellipse cx="1006.4" cy="725.2" rx="2.6" ry="3.4" fill="#8fd3f7" stroke="#050b10" stroke-width="0.8" transform="rotate(-20 1006.4 725.2)"/>
<ellipse cx="1015.6" cy="732.7" rx="2.6" ry="3.4" fill="#8fd3f7" stroke="#050b10" stroke-width="0.8" transform="rotate(-20 1015.6 732.7)"/>
<polygon points="721.4,686.1 897.6,859.7 913.6,859.7 1009.7,782.3 1007.1,774.2 902.9,846.3" fill="#000" opacity="0.25" filter="url(#b4)"/>
<path d="M731.2 687.3 Q726.2 682.4 731.8 678.3 L815.8 617.6 Q821.5 613.5 826.8 618.1 L999.7 769.1 Q1004.9 773.7 999.5 778.1 L909.7 851.0 Q904.3 855.4 899.3 850.5 Z" fill="#1f4560" stroke="#08141c" stroke-width="1" stroke-linejoin="round"/>
<path d="M731.2 684.3 Q726.2 679.5 731.8 675.4 L815.8 614.9 Q821.5 610.8 826.8 615.4 L999.1 764.9 Q1004.4 769.4 999.0 773.9 L909.7 846.7 Q904.3 851.1 899.2 846.3 Z" fill="#66c9fc" stroke="#08141c" stroke-width="1" stroke-linejoin="round"/>
<polygon points="739.5,676 815.4,623.4 987,772.9 906.9,835.7" fill="#6ad1ff" stroke="#08141c" stroke-width="1" stroke-linejoin="round" />
<polyline points="740.1,676.5 815.6,624.2" fill="none" stroke="#0b2030" stroke-width="2.2" stroke-linejoin="round" stroke-linecap="round" />
<circle cx="825.5" cy="622.6" r="1.1" fill="#061018"/>
<circle cx="739.5" cy="684.0" r="1.1" fill="#061018"/>
<circle cx="899.7" cy="687.5" r="1.1" fill="#061018"/>
<circle cx="810.8" cy="753.4" r="1.1" fill="#061018"/>
<circle cx="980.9" cy="758.2" r="1.1" fill="#061018"/>
<circle cx="890.1" cy="829.8" r="1.1" fill="#061018"/>
<polygon points="609,744.7 772.6,923.7 845,871.5 843.1,885.3 768.9,936.1 607.9,760.7" fill="#000" opacity="0.28" filter="url(#b4)"/>
<polygon points="686.3,688.7 609,748.2 772.6,928.7 858.8,858.7" fill="#1f4560" stroke="#08141c" stroke-width="1" stroke-linejoin="round" />
<polygon points="686.3,686.7 858.8,854.2 772.6,923.7 609,744.7" fill="#66c9fc" stroke="#08141c" stroke-width="1" stroke-linejoin="round" />
<polygon points="686.3,685.2 810.5,805.8 793.8,819.1 670.8,696.8" fill="#66c9fc" stroke="#08141c" stroke-width="0.7" stroke-linejoin="round" />
<polygon points="674.1,696.2 681.6,703.7 683.1,695.8 677.9,690.6" fill="#2c6592" stroke="#08141c" stroke-width="0.8" stroke-linejoin="round" />
<polygon points="692.3,695.7 681.6,703.7 683.1,695.8 689.7,690.8" fill="#245478" stroke="#08141c" stroke-width="0.8" stroke-linejoin="round" />
<polygon points="684.7,688.3 674.1,696.2 677.9,690.6 684.4,685.6" fill="#3f7fb0" stroke="#08141c" stroke-width="0.5" stroke-linejoin="round" />
<polygon points="684.4,685.6 689.7,690.8 683.1,695.8 677.9,690.6" fill="#62c4fa" stroke="#08141c" stroke-width="0.6" stroke-linejoin="round" />
<polygon points="682,704.1 689.6,711.6 691.1,703.6 685.9,698.4" fill="#2c6592" stroke="#08141c" stroke-width="0.8" stroke-linejoin="round" />
<polygon points="700.3,703.5 689.6,711.6 691.1,703.6 697.7,698.6" fill="#245478" stroke="#08141c" stroke-width="0.8" stroke-linejoin="round" />
<polygon points="692.7,696.1 682,704.1 685.9,698.4 692.5,693.5" fill="#3f7fb0" stroke="#08141c" stroke-width="0.5" stroke-linejoin="round" />
<polygon points="692.5,693.5 697.7,698.6 691.1,703.6 685.9,698.4" fill="#62c4fa" stroke="#08141c" stroke-width="0.6" stroke-linejoin="round" />
<polygon points="658.2,708.1 665.7,715.7 667.2,707.7 662,702.5" fill="#2c6592" stroke="#08141c" stroke-width="0.8" stroke-linejoin="round" />
<polygon points="676.7,707.4 665.7,715.7 667.2,707.7 674.2,702.5" fill="#245478" stroke="#08141c" stroke-width="0.8" stroke-linejoin="round" />
<polygon points="669.2,699.9 658.2,708.1 662,702.5 669,697.3" fill="#3f7fb0" stroke="#08141c" stroke-width="0.5" stroke-linejoin="round" />
<polygon points="669,697.3 674.2,702.5 667.2,707.7 662,702.5" fill="#62c4fa" stroke="#08141c" stroke-width="0.6" stroke-linejoin="round" />
<polygon points="690,712 697.6,719.5 699.1,711.5 693.8,706.3" fill="#2c6592" stroke="#08141c" stroke-width="0.8" stroke-linejoin="round" />
<polygon points="708.3,711.3 697.6,719.5 699.1,711.5 705.8,706.5" fill="#245478" stroke="#08141c" stroke-width="0.8" stroke-linejoin="round" />
<polygon points="700.7,703.9 690,712 693.8,706.3 700.5,701.3" fill="#3f7fb0" stroke="#08141c" stroke-width="0.5" stroke-linejoin="round" />
<polygon points="700.5,701.3 705.8,706.5 699.1,711.5 693.8,706.3" fill="#62c4fa" stroke="#08141c" stroke-width="0.6" stroke-linejoin="round" />
<polygon points="666.1,716.1 673.6,723.7 675.1,715.7 669.9,710.5" fill="#2c6592" stroke="#08141c" stroke-width="0.8" stroke-linejoin="round" />
<polygon points="684.7,715.3 673.6,723.7 675.1,715.7 682.1,710.4" fill="#245478" stroke="#08141c" stroke-width="0.8" stroke-linejoin="round" />
<polygon points="677.1,707.8 666.1,716.1 669.9,710.5 676.9,705.2" fill="#3f7fb0" stroke="#08141c" stroke-width="0.5" stroke-linejoin="round" />
<polygon points="676.9,705.2 682.1,710.4 675.1,715.7 669.9,710.5" fill="#62c4fa" stroke="#08141c" stroke-width="0.6" stroke-linejoin="round" />
<polygon points="646.6,716.8 657.9,728.5 659.5,720.5 650.4,711.2" fill="#2c6592" stroke="#08141c" stroke-width="0.8" stroke-linejoin="round" />
<polygon points="669,720.2 657.9,728.5 659.5,720.5 666.5,715.3" fill="#245478" stroke="#08141c" stroke-width="0.8" stroke-linejoin="round" />
<polygon points="657.6,708.6 646.6,716.8 650.4,711.2 657.4,706" fill="#3f7fb0" stroke="#08141c" stroke-width="0.5" stroke-linejoin="round" />
<polygon points="657.4,706 666.5,715.3 659.5,720.5 650.4,711.2" fill="#62c4fa" stroke="#08141c" stroke-width="0.6" stroke-linejoin="round" />
<polygon points="698,719.9 705.5,727.4 707.1,719.4 701.8,714.2" fill="#2c6592" stroke="#08141c" stroke-width="0.8" stroke-linejoin="round" />
<polygon points="716.4,719.2 705.5,727.4 707.1,719.4 713.8,714.3" fill="#245478" stroke="#08141c" stroke-width="0.8" stroke-linejoin="round" />
<polygon points="708.7,711.7 698,719.9 701.8,714.2 708.5,709.1" fill="#3f7fb0" stroke="#08141c" stroke-width="0.5" stroke-linejoin="round" />
<polygon points="708.5,709.1 713.8,714.3 707.1,719.4 701.8,714.2" fill="#62c4fa" stroke="#08141c" stroke-width="0.6" stroke-linejoin="round" />
<polygon points="674,724.1 681.5,731.7 683,723.7 677.8,718.4" fill="#2c6592" stroke="#08141c" stroke-width="0.8" stroke-linejoin="round" />
<polygon points="692.6,723.3 681.5,731.7 683,723.7 690.1,718.4" fill="#245478" stroke="#08141c" stroke-width="0.8" stroke-linejoin="round" />
<polygon points="685.1,715.7 674,724.1 677.8,718.4 684.8,713.1" fill="#3f7fb0" stroke="#08141c" stroke-width="0.5" stroke-linejoin="round" />
<polygon points="684.8,713.1 690.1,718.4 683,723.7 677.8,718.4" fill="#62c4fa" stroke="#08141c" stroke-width="0.6" stroke-linejoin="round" />
<polygon points="705.9,727.8 713.5,735.3 715.1,727.2 709.8,722.1" fill="#2c6592" stroke="#08141c" stroke-width="0.8" stroke-linejoin="round" />
<polygon points="724.4,727 713.5,735.3 715.1,727.2 721.8,722.1" fill="#245478" stroke="#08141c" stroke-width="0.8" stroke-linejoin="round" />
<polygon points="716.8,719.6 705.9,727.8 709.8,722.1 716.5,716.9" fill="#3f7fb0" stroke="#08141c" stroke-width="0.5" stroke-linejoin="round" />
<polygon points="716.5,716.9 721.8,722.1 715.1,727.2 709.8,722.1" fill="#62c4fa" stroke="#08141c" stroke-width="0.6" stroke-linejoin="round" />
<polygon points="635,725.5 648.2,739.4 649.8,731.4 638.8,719.9" fill="#2c6592" stroke="#08141c" stroke-width="0.8" stroke-linejoin="round" />
<polygon points="659.3,731 648.2,739.4 649.8,731.4 656.8,726.1" fill="#245478" stroke="#08141c" stroke-width="0.8" stroke-linejoin="round" />
<polygon points="646,717.3 635,725.5 638.8,719.9 645.7,714.7" fill="#3f7fb0" stroke="#08141c" stroke-width="0.5" stroke-linejoin="round" />
<polygon points="645.7,714.7 656.8,726.1 649.8,731.4 638.8,719.9" fill="#62c4fa" stroke="#08141c" stroke-width="0.6" stroke-linejoin="round" />
<polygon points="658.4,729 665.8,736.6 667.3,728.6 662.2,723.3" fill="#2c6592" stroke="#08141c" stroke-width="0.8" stroke-linejoin="round" />
<polygon points="676.9,728.2 665.8,736.6 667.3,728.6 674.4,723.3" fill="#245478" stroke="#08141c" stroke-width="0.8" stroke-linejoin="round" />
<polygon points="669.4,720.6 658.4,729 662.2,723.3 669.2,718" fill="#3f7fb0" stroke="#08141c" stroke-width="0.5" stroke-linejoin="round" />
<polygon points="669.2,718 674.4,723.3 667.3,728.6 662.2,723.3" fill="#62c4fa" stroke="#08141c" stroke-width="0.6" stroke-linejoin="round" />
<polygon points="681.9,732.1 689.4,739.7 690.9,731.7 685.7,726.4" fill="#2c6592" stroke="#08141c" stroke-width="0.8" stroke-linejoin="round" />
<polygon points="700.6,731.2 689.4,739.7 690.9,731.7 698,726.3" fill="#245478" stroke="#08141c" stroke-width="0.8" stroke-linejoin="round" />
<polygon points="693,723.7 681.9,732.1 685.7,726.4 692.8,721.1" fill="#3f7fb0" stroke="#08141c" stroke-width="0.5" stroke-linejoin="round" />
<polygon points="692.8,721.1 698,726.3 690.9,731.7 685.7,726.4" fill="#62c4fa" stroke="#08141c" stroke-width="0.6" stroke-linejoin="round" />
<polygon points="713.9,735.7 721.5,743.2 723.1,735.1 717.8,729.9" fill="#2c6592" stroke="#08141c" stroke-width="0.8" stroke-linejoin="round" />
<polygon points="732.4,734.8 721.5,743.2 723.1,735.1 729.8,729.9" fill="#245478" stroke="#08141c" stroke-width="0.8" stroke-linejoin="round" />
<polygon points="724.8,727.4 713.9,735.7 717.8,729.9 724.5,724.8" fill="#3f7fb0" stroke="#08141c" stroke-width="0.5" stroke-linejoin="round" />
<polygon points="724.5,724.8 729.8,729.9 723.1,735.1 717.8,729.9" fill="#62c4fa" stroke="#08141c" stroke-width="0.6" stroke-linejoin="round" />
<polygon points="666.2,737 673.6,744.7 675.2,736.7 670,731.3" fill="#2c6592" stroke="#08141c" stroke-width="0.8" stroke-linejoin="round" />
<polygon points="684.8,736.2 673.6,744.7 675.2,736.7 682.2,731.3" fill="#245478" stroke="#08141c" stroke-width="0.8" stroke-linejoin="round" />
<polygon points="677.3,728.6 666.2,737 670,731.3 677,726" fill="#3f7fb0" stroke="#08141c" stroke-width="0.5" stroke-linejoin="round" />
<polygon points="677,726 682.2,731.3 675.2,736.7 670,731.3" fill="#62c4fa" stroke="#08141c" stroke-width="0.6" stroke-linejoin="round" />
<polygon points="623.4,734.2 640.4,752.4 641.9,744.3 627.2,728.6" fill="#2c6592" stroke="#08141c" stroke-width="0.8" stroke-linejoin="round" />
<polygon points="651.5,744 640.4,752.4 641.9,744.3 648.9,739" fill="#245478" stroke="#08141c" stroke-width="0.8" stroke-linejoin="round" />
<polygon points="634.4,726 623.4,734.2 627.2,728.6 634.1,723.4" fill="#3f7fb0" stroke="#08141c" stroke-width="0.5" stroke-linejoin="round" />
<polygon points="634.1,723.4 648.9,739 641.9,744.3 627.2,728.6" fill="#62c4fa" stroke="#08141c" stroke-width="0.6" stroke-linejoin="round" />
<polygon points="648.6,739.8 656,747.6 657.5,739.5 652.4,734.1" fill="#2c6592" stroke="#08141c" stroke-width="0.8" stroke-linejoin="round" />
<polygon points="667.1,739.1 656,747.6 657.5,739.5 664.6,734.2" fill="#245478" stroke="#08141c" stroke-width="0.8" stroke-linejoin="round" />
<polygon points="659.7,731.5 648.6,739.8 652.4,734.1 659.4,728.8" fill="#3f7fb0" stroke="#08141c" stroke-width="0.5" stroke-linejoin="round" />
<polygon points="659.4,728.8 664.6,734.2 657.5,739.5 652.4,734.1" fill="#62c4fa" stroke="#08141c" stroke-width="0.6" stroke-linejoin="round" />
<polygon points="689.8,740.1 697.2,747.7 698.8,739.7 693.6,734.4" fill="#2c6592" stroke="#08141c" stroke-width="0.8" stroke-linejoin="round" />
<polygon points="708.5,739.1 697.2,747.7 698.8,739.7 705.9,734.2" fill="#245478" stroke="#08141c" stroke-width="0.8" stroke-linejoin="round" />
<polygon points="701,731.6 689.8,740.1 693.6,734.4 700.7,729" fill="#3f7fb0" stroke="#08141c" stroke-width="0.5" stroke-linejoin="round" />
<polygon points="700.7,729 705.9,734.2 698.8,739.7 693.6,734.4" fill="#62c4fa" stroke="#08141c" stroke-width="0.6" stroke-linejoin="round" />
<polygon points="674,745.1 681.4,752.8 683,744.7 677.8,739.4" fill="#2c6592" stroke="#08141c" stroke-width="0.8" stroke-linejoin="round" />
<polygon points="692.7,744.2 681.4,752.8 683,744.7 690.1,739.3" fill="#245478" stroke="#08141c" stroke-width="0.8" stroke-linejoin="round" />
<polygon points="685.2,736.6 674,745.1 677.8,739.4 684.9,734" fill="#3f7fb0" stroke="#08141c" stroke-width="0.5" stroke-linejoin="round" />
<polygon points="684.9,734 690.1,739.3 683,744.7 677.8,739.4" fill="#62c4fa" stroke="#08141c" stroke-width="0.6" stroke-linejoin="round" />
<polygon points="723.7,745.4 731.2,752.8 732.8,744.7 727.6,739.6" fill="#2c6592" stroke="#08141c" stroke-width="0.8" stroke-linejoin="round" />
<polygon points="742.2,744.4 731.2,752.8 732.8,744.7 739.6,739.5" fill="#245478" stroke="#08141c" stroke-width="0.8" stroke-linejoin="round" />
<polygon points="734.6,736.9 723.7,745.4 727.6,739.6 734.4,734.3" fill="#3f7fb0" stroke="#08141c" stroke-width="0.5" stroke-linejoin="round" />
<polygon points="734.4,734.3 739.6,739.5 732.8,744.7 727.6,739.6" fill="#62c4fa" stroke="#08141c" stroke-width="0.6" stroke-linejoin="round" />
<polygon points="697.6,748.1 705.1,755.7 706.7,747.6 701.5,742.4" fill="#2c6592" stroke="#08141c" stroke-width="0.8" stroke-linejoin="round" />
<polygon points="716.5,747 705.1,755.7 706.7,747.6 713.9,742.2" fill="#245478" stroke="#08141c" stroke-width="0.8" stroke-linejoin="round" />
<polygon points="708.9,739.5 697.6,748.1 701.5,742.4 708.7,736.9" fill="#3f7fb0" stroke="#08141c" stroke-width="0.5" stroke-linejoin="round" />
<polygon points="708.7,736.9 713.9,742.2 706.7,747.6 701.5,742.4" fill="#62c4fa" stroke="#08141c" stroke-width="0.6" stroke-linejoin="round" />
<polygon points="656.4,748 663.7,755.7 665.3,747.7 660.2,742.3" fill="#2c6592" stroke="#08141c" stroke-width="0.8" stroke-linejoin="round" />
<polygon points="674.9,747.2 663.7,755.7 665.3,747.7 672.4,742.3" fill="#245478" stroke="#08141c" stroke-width="0.8" stroke-linejoin="round" />
<polygon points="667.5,739.5 656.4,748 660.2,742.3 667.2,736.9" fill="#3f7fb0" stroke="#08141c" stroke-width="0.5" stroke-linejoin="round" />
<polygon points="667.2,736.9 672.4,742.3 665.3,747.7 660.2,742.3" fill="#62c4fa" stroke="#08141c" stroke-width="0.6" stroke-linejoin="round" />
<polygon points="640.7,752.8 648.1,760.6 649.6,752.5 644.6,747.1" fill="#2c6592" stroke="#08141c" stroke-width="0.8" stroke-linejoin="round" />
<polygon points="659.2,752.1 648.1,760.6 649.6,752.5 656.7,747.2" fill="#245478" stroke="#08141c" stroke-width="0.8" stroke-linejoin="round" />
<polygon points="651.9,744.4 640.7,752.8 644.6,747.1 651.6,741.8" fill="#3f7fb0" stroke="#08141c" stroke-width="0.5" stroke-linejoin="round" />
<polygon points="651.6,741.8 656.7,747.2 649.6,752.5 644.6,747.1" fill="#62c4fa" stroke="#08141c" stroke-width="0.6" stroke-linejoin="round" />
<polygon points="681.8,753.2 689.2,760.9 690.8,752.8 685.7,747.5" fill="#2c6592" stroke="#08141c" stroke-width="0.8" stroke-linejoin="round" />
<polygon points="700.5,752.2 689.2,760.9 690.8,752.8 698,747.3" fill="#245478" stroke="#08141c" stroke-width="0.8" stroke-linejoin="round" />
<polygon points="693.1,744.6 681.8,753.2 685.7,747.5 692.8,742" fill="#3f7fb0" stroke="#08141c" stroke-width="0.5" stroke-linejoin="round" />
<polygon points="692.8,742 698,747.3 690.8,752.8 685.7,747.5" fill="#62c4fa" stroke="#08141c" stroke-width="0.6" stroke-linejoin="round" />
<polygon points="731.6,753.2 739.2,760.7 740.8,752.6 735.6,747.4" fill="#2c6592" stroke="#08141c" stroke-width="0.8" stroke-linejoin="round" />
<polygon points="750.3,752.2 739.2,760.7 740.8,752.6 747.7,747.3" fill="#245478" stroke="#08141c" stroke-width="0.8" stroke-linejoin="round" />
<polygon points="742.6,744.8 731.6,753.2 735.6,747.4 742.4,742.2" fill="#3f7fb0" stroke="#08141c" stroke-width="0.5" stroke-linejoin="round" />
<polygon points="742.4,742.2 747.7,747.3 740.8,752.6 735.6,747.4" fill="#62c4fa" stroke="#08141c" stroke-width="0.6" stroke-linejoin="round" />
<polygon points="705.5,756.1 713,763.7 714.6,755.6 709.4,750.4" fill="#2c6592" stroke="#08141c" stroke-width="0.8" stroke-linejoin="round" />
<polygon points="724.4,755 713,763.7 714.6,755.6 721.8,750.1" fill="#245478" stroke="#08141c" stroke-width="0.8" stroke-linejoin="round" />
<polygon points="716.9,747.4 705.5,756.1 709.4,750.4 716.6,744.9" fill="#3f7fb0" stroke="#08141c" stroke-width="0.5" stroke-linejoin="round" />
<polygon points="716.6,744.9 721.8,750.1 714.6,755.6 709.4,750.4" fill="#62c4fa" stroke="#08141c" stroke-width="0.6" stroke-linejoin="round" />
<polygon points="664.1,756.1 671.5,763.9 673.1,755.8 668,750.4" fill="#2c6592" stroke="#08141c" stroke-width="0.8" stroke-linejoin="round" />
<polygon points="682.7,755.3 671.5,763.9 673.1,755.8 680.2,750.4" fill="#245478" stroke="#08141c" stroke-width="0.8" stroke-linejoin="round" />
<polygon points="675.3,747.6 664.1,756.1 668,750.4 675.1,745" fill="#3f7fb0" stroke="#08141c" stroke-width="0.5" stroke-linejoin="round" />
<polygon points="675.1,745 680.2,750.4 673.1,755.8 668,750.4" fill="#62c4fa" stroke="#08141c" stroke-width="0.6" stroke-linejoin="round" />
<polygon points="627.1,759.6 634.3,767.5 635.9,759.4 630.9,753.9" fill="#2c6592" stroke="#08141c" stroke-width="0.8" stroke-linejoin="round" />
<polygon points="645.5,759 634.3,767.5 635.9,759.4 643,754.1" fill="#245478" stroke="#08141c" stroke-width="0.8" stroke-linejoin="round" />
<polygon points="638.2,751.2 627.1,759.6 630.9,753.9 637.9,748.6" fill="#3f7fb0" stroke="#08141c" stroke-width="0.5" stroke-linejoin="round" />
<polygon points="637.9,748.6 643,754.1 635.9,759.4 630.9,753.9" fill="#62c4fa" stroke="#08141c" stroke-width="0.6" stroke-linejoin="round" />
<polygon points="739.6,761.1 747.2,768.6 748.8,760.5 743.5,755.3" fill="#2c6592" stroke="#08141c" stroke-width="0.8" stroke-linejoin="round" />
<polygon points="758.3,760 747.2,768.6 748.8,760.5 755.7,755.2" fill="#245478" stroke="#08141c" stroke-width="0.8" stroke-linejoin="round" />
<polygon points="750.7,752.6 739.6,761.1 743.5,755.3 750.4,750" fill="#3f7fb0" stroke="#08141c" stroke-width="0.5" stroke-linejoin="round" />
<polygon points="750.4,750 755.7,755.2 748.8,760.5 743.5,755.3" fill="#62c4fa" stroke="#08141c" stroke-width="0.6" stroke-linejoin="round" />
<polygon points="648.4,761 655.8,768.8 657.4,760.8 652.3,755.3" fill="#2c6592" stroke="#08141c" stroke-width="0.8" stroke-linejoin="round" />
<polygon points="667,760.3 655.8,768.8 657.4,760.8 664.4,755.4" fill="#245478" stroke="#08141c" stroke-width="0.8" stroke-linejoin="round" />
<polygon points="659.6,752.5 648.4,761 652.3,755.3 659.3,750" fill="#3f7fb0" stroke="#08141c" stroke-width="0.5" stroke-linejoin="round" />
<polygon points="659.3,750 664.4,755.4 657.4,760.8 652.3,755.3" fill="#62c4fa" stroke="#08141c" stroke-width="0.6" stroke-linejoin="round" />
<polygon points="689.6,761.3 697.1,769 698.7,760.8 693.5,755.5" fill="#2c6592" stroke="#08141c" stroke-width="0.8" stroke-linejoin="round" />
<polygon points="708.4,760.2 697.1,769 698.7,760.8 705.9,755.3" fill="#245478" stroke="#08141c" stroke-width="0.8" stroke-linejoin="round" />
<polygon points="701,752.6 689.6,761.3 693.5,755.5 700.7,750.1" fill="#3f7fb0" stroke="#08141c" stroke-width="0.5" stroke-linejoin="round" />
<polygon points="700.7,750.1 705.9,755.3 698.7,760.8 693.5,755.5" fill="#62c4fa" stroke="#08141c" stroke-width="0.6" stroke-linejoin="round" />
<polygon points="713.4,764.1 720.9,771.7 722.5,763.6 717.3,758.3" fill="#2c6592" stroke="#08141c" stroke-width="0.8" stroke-linejoin="round" />
<polygon points="732.3,762.9 720.9,771.7 722.5,763.6 729.8,758" fill="#245478" stroke="#08141c" stroke-width="0.8" stroke-linejoin="round" />
<polygon points="724.8,755.4 713.4,764.1 717.3,758.3 724.5,752.8" fill="#3f7fb0" stroke="#08141c" stroke-width="0.5" stroke-linejoin="round" />
<polygon points="724.5,752.8 729.8,758 722.5,763.6 717.3,758.3" fill="#62c4fa" stroke="#08141c" stroke-width="0.6" stroke-linejoin="round" />
<polygon points="671.9,764.3 679.3,772.1 680.9,763.9 675.7,758.6" fill="#2c6592" stroke="#08141c" stroke-width="0.8" stroke-linejoin="round" />
<polygon points="690.6,763.4 679.3,772.1 680.9,763.9 688,758.5" fill="#245478" stroke="#08141c" stroke-width="0.8" stroke-linejoin="round" />
<polygon points="683.1,755.7 671.9,764.3 675.7,758.6 682.9,753.1" fill="#3f7fb0" stroke="#08141c" stroke-width="0.5" stroke-linejoin="round" />
<polygon points="682.9,753.1 688,758.5 680.9,763.9 675.7,758.6" fill="#62c4fa" stroke="#08141c" stroke-width="0.6" stroke-linejoin="round" />
<polygon points="747.6,769 755.1,776.5 756.8,768.4 751.5,763.2" fill="#2c6592" stroke="#08141c" stroke-width="0.8" stroke-linejoin="round" />
<polygon points="766.3,767.8 755.1,776.5 756.8,768.4 763.7,763" fill="#245478" stroke="#08141c" stroke-width="0.8" stroke-linejoin="round" />
<polygon points="758.7,760.4 747.6,769 751.5,763.2 758.4,757.8" fill="#3f7fb0" stroke="#08141c" stroke-width="0.5" stroke-linejoin="round" />
<polygon points="758.4,757.8 763.7,763 756.8,768.4 751.5,763.2" fill="#62c4fa" stroke="#08141c" stroke-width="0.6" stroke-linejoin="round" />
<polygon points="634.7,767.9 643.9,777.9 645.5,769.8 638.6,762.2" fill="#2c6592" stroke="#08141c" stroke-width="0.8" stroke-linejoin="round" />
<polygon points="655.1,769.3 643.9,777.9 645.5,769.8 652.6,764.4" fill="#245478" stroke="#08141c" stroke-width="0.8" stroke-linejoin="round" />
<polygon points="645.9,759.4 634.7,767.9 638.6,762.2 645.6,756.9" fill="#3f7fb0" stroke="#08141c" stroke-width="0.5" stroke-linejoin="round" />
<polygon points="645.6,756.9 652.6,764.4 645.5,769.8 638.6,762.2" fill="#62c4fa" stroke="#08141c" stroke-width="0.6" stroke-linejoin="round" />
<polygon points="697.5,769.4 704.9,777 706.5,768.9 701.4,763.6" fill="#2c6592" stroke="#08141c" stroke-width="0.8" stroke-linejoin="round" />
<polygon points="716.3,768.2 704.9,777 706.5,768.9 713.7,763.3" fill="#245478" stroke="#08141c" stroke-width="0.8" stroke-linejoin="round" />
<polygon points="708.8,760.6 697.5,769.4 701.4,763.6 708.6,758.1" fill="#3f7fb0" stroke="#08141c" stroke-width="0.5" stroke-linejoin="round" />
<polygon points="708.6,758.1 713.7,763.3 706.5,768.9 701.4,763.6" fill="#62c4fa" stroke="#08141c" stroke-width="0.6" stroke-linejoin="round" />
<polygon points="656.1,769.3 663.5,777.1 665.1,769 660,763.6" fill="#2c6592" stroke="#08141c" stroke-width="0.8" stroke-linejoin="round" />
<polygon points="674.7,768.5 663.5,777.1 665.1,769 672.2,763.5" fill="#245478" stroke="#08141c" stroke-width="0.8" stroke-linejoin="round" />
<polygon points="667.4,760.7 656.1,769.3 660,763.6 667.1,758.1" fill="#3f7fb0" stroke="#08141c" stroke-width="0.5" stroke-linejoin="round" />
<polygon points="667.1,758.1 672.2,763.5 665.1,769 660,763.6" fill="#62c4fa" stroke="#08141c" stroke-width="0.6" stroke-linejoin="round" />
<polygon points="721.3,772.1 728.8,779.7 730.4,771.6 725.2,766.3" fill="#2c6592" stroke="#08141c" stroke-width="0.8" stroke-linejoin="round" />
<polygon points="740.3,770.8 728.8,779.7 730.4,771.6 737.7,766" fill="#245478" stroke="#08141c" stroke-width="0.8" stroke-linejoin="round" />
<polygon points="732.8,763.3 721.3,772.1 725.2,766.3 732.5,760.7" fill="#3f7fb0" stroke="#08141c" stroke-width="0.5" stroke-linejoin="round" />
<polygon points="732.5,760.7 737.7,766 730.4,771.6 725.2,766.3" fill="#62c4fa" stroke="#08141c" stroke-width="0.6" stroke-linejoin="round" />
<polygon points="679.7,772.5 687,780.2 688.6,772.1 683.5,766.7" fill="#2c6592" stroke="#08141c" stroke-width="0.8" stroke-linejoin="round" />
<polygon points="698.4,771.5 687,780.2 688.6,772.1 695.8,766.6" fill="#245478" stroke="#08141c" stroke-width="0.8" stroke-linejoin="round" />
<polygon points="691,763.8 679.7,772.5 683.5,766.7 690.7,761.2" fill="#3f7fb0" stroke="#08141c" stroke-width="0.5" stroke-linejoin="round" />
<polygon points="690.7,761.2 695.8,766.6 688.6,772.1 683.5,766.7" fill="#62c4fa" stroke="#08141c" stroke-width="0.6" stroke-linejoin="round" />
<polygon points="755.6,776.9 763.1,784.4 764.8,776.2 759.5,771" fill="#2c6592" stroke="#08141c" stroke-width="0.8" stroke-linejoin="round" />
<polygon points="774.3,775.6 763.1,784.4 764.8,776.2 771.7,770.8" fill="#245478" stroke="#08141c" stroke-width="0.8" stroke-linejoin="round" />
<polygon points="766.7,768.2 755.6,776.9 759.5,771 766.4,765.7" fill="#3f7fb0" stroke="#08141c" stroke-width="0.5" stroke-linejoin="round" />
<polygon points="766.4,765.7 771.7,770.8 764.8,776.2 759.5,771" fill="#62c4fa" stroke="#08141c" stroke-width="0.6" stroke-linejoin="round" />
<polygon points="705.3,777.5 712.7,785.1 714.4,777 709.2,771.7" fill="#2c6592" stroke="#08141c" stroke-width="0.8" stroke-linejoin="round" />
<polygon points="724.2,776.2 712.7,785.1 714.4,777 721.6,771.4" fill="#245478" stroke="#08141c" stroke-width="0.8" stroke-linejoin="round" />
<polygon points="716.7,768.6 705.3,777.5 709.2,771.7 716.4,766.1" fill="#3f7fb0" stroke="#08141c" stroke-width="0.5" stroke-linejoin="round" />
<polygon points="716.4,766.1 721.6,771.4 714.4,777 709.2,771.7" fill="#62c4fa" stroke="#08141c" stroke-width="0.6" stroke-linejoin="round" />
<polygon points="663.8,777.5 671.2,785.3 672.8,777.2 667.7,771.8" fill="#2c6592" stroke="#08141c" stroke-width="0.8" stroke-linejoin="round" />
<polygon points="682.5,776.6 671.2,785.3 672.8,777.2 680,771.7" fill="#245478" stroke="#08141c" stroke-width="0.8" stroke-linejoin="round" />
<polygon points="675.1,768.9 663.8,777.5 667.7,771.8 674.8,766.3" fill="#3f7fb0" stroke="#08141c" stroke-width="0.5" stroke-linejoin="round" />
<polygon points="674.8,766.3 680,771.7 672.8,777.2 667.7,771.8" fill="#62c4fa" stroke="#08141c" stroke-width="0.6" stroke-linejoin="round" />
<polygon points="729.2,780.1 736.7,787.7 738.3,779.6 733.1,774.3" fill="#2c6592" stroke="#08141c" stroke-width="0.8" stroke-linejoin="round" />
<polygon points="748.2,778.7 736.7,787.7 738.3,779.6 745.6,773.9" fill="#245478" stroke="#08141c" stroke-width="0.8" stroke-linejoin="round" />
<polygon points="740.7,771.2 729.2,780.1 733.1,774.3 740.4,768.7" fill="#3f7fb0" stroke="#08141c" stroke-width="0.5" stroke-linejoin="round" />
<polygon points="740.4,768.7 745.6,773.9 738.3,779.6 733.1,774.3" fill="#62c4fa" stroke="#08141c" stroke-width="0.6" stroke-linejoin="round" />
<polygon points="687.4,780.6 694.8,788.4 696.4,780.2 691.3,774.9" fill="#2c6592" stroke="#08141c" stroke-width="0.8" stroke-linejoin="round" />
<polygon points="706.2,779.6 694.8,788.4 696.4,780.2 703.6,774.7" fill="#245478" stroke="#08141c" stroke-width="0.8" stroke-linejoin="round" />
<polygon points="698.8,771.9 687.4,780.6 691.3,774.9 698.5,769.3" fill="#3f7fb0" stroke="#08141c" stroke-width="0.5" stroke-linejoin="round" />
<polygon points="698.5,769.3 703.6,774.7 696.4,780.2 691.3,774.9" fill="#62c4fa" stroke="#08141c" stroke-width="0.6" stroke-linejoin="round" />
<polygon points="763.5,784.8 771.1,792.3 772.8,784.1 767.5,778.9" fill="#2c6592" stroke="#08141c" stroke-width="0.8" stroke-linejoin="round" />
<polygon points="782.4,783.5 771.1,792.3 772.8,784.1 779.7,778.6" fill="#245478" stroke="#08141c" stroke-width="0.8" stroke-linejoin="round" />
<polygon points="774.8,776 763.5,784.8 767.5,778.9 774.5,773.5" fill="#3f7fb0" stroke="#08141c" stroke-width="0.5" stroke-linejoin="round" />
<polygon points="774.5,773.5 779.7,778.6 772.8,784.1 767.5,778.9" fill="#62c4fa" stroke="#08141c" stroke-width="0.6" stroke-linejoin="round" />
<polygon points="713.1,785.5 720.5,793.2 722.2,785 717,779.7" fill="#2c6592" stroke="#08141c" stroke-width="0.8" stroke-linejoin="round" />
<polygon points="732.1,784.2 720.5,793.2 722.2,785 729.5,779.4" fill="#245478" stroke="#08141c" stroke-width="0.8" stroke-linejoin="round" />
<polygon points="724.6,776.6 713.1,785.5 717,779.7 724.3,774.1" fill="#3f7fb0" stroke="#08141c" stroke-width="0.5" stroke-linejoin="round" />
<polygon points="724.3,774.1 729.5,779.4 722.2,785 717,779.7" fill="#62c4fa" stroke="#08141c" stroke-width="0.6" stroke-linejoin="round" />
<polygon points="671.5,785.8 678.9,793.6 680.5,785.4 675.4,780" fill="#2c6592" stroke="#08141c" stroke-width="0.8" stroke-linejoin="round" />
<polygon points="690.3,784.8 678.9,793.6 680.5,785.4 687.7,779.9" fill="#245478" stroke="#08141c" stroke-width="0.8" stroke-linejoin="round" />
<polygon points="682.9,777 671.5,785.8 675.4,780 682.6,774.5" fill="#3f7fb0" stroke="#08141c" stroke-width="0.5" stroke-linejoin="round" />
<polygon points="682.6,774.5 687.7,779.9 680.5,785.4 675.4,780" fill="#62c4fa" stroke="#08141c" stroke-width="0.6" stroke-linejoin="round" />
<polygon points="737.1,788.2 744.6,795.7 746.2,787.6 741,782.3" fill="#2c6592" stroke="#08141c" stroke-width="0.8" stroke-linejoin="round" />
<polygon points="756.2,786.7 744.6,795.7 746.2,787.6 753.6,781.8" fill="#245478" stroke="#08141c" stroke-width="0.8" stroke-linejoin="round" />
<polygon points="748.6,779.2 737.1,788.2 741,782.3 748.3,776.6" fill="#3f7fb0" stroke="#08141c" stroke-width="0.5" stroke-linejoin="round" />
<polygon points="748.3,776.6 753.6,781.8 746.2,787.6 741,782.3" fill="#62c4fa" stroke="#08141c" stroke-width="0.6" stroke-linejoin="round" />
<polygon points="695.2,788.8 702.5,796.5 704.2,788.4 699.1,783" fill="#2c6592" stroke="#08141c" stroke-width="0.8" stroke-linejoin="round" />
<polygon points="714,787.6 702.5,796.5 704.2,788.4 711.5,782.8" fill="#245478" stroke="#08141c" stroke-width="0.8" stroke-linejoin="round" />
<polygon points="706.6,780 695.2,788.8 699.1,783 706.3,777.4" fill="#3f7fb0" stroke="#08141c" stroke-width="0.5" stroke-linejoin="round" />
<polygon points="706.3,777.4 711.5,782.8 704.2,788.4 699.1,783" fill="#62c4fa" stroke="#08141c" stroke-width="0.6" stroke-linejoin="round" />
<polygon points="720.9,793.6 728.4,801.3 730,793.1 724.9,787.8" fill="#2c6592" stroke="#08141c" stroke-width="0.8" stroke-linejoin="round" />
<polygon points="740,792.2 728.4,801.3 730,793.1 737.4,787.4" fill="#245478" stroke="#08141c" stroke-width="0.8" stroke-linejoin="round" />
<polygon points="732.5,784.7 720.9,793.6 724.9,787.8 732.2,782.1" fill="#3f7fb0" stroke="#08141c" stroke-width="0.5" stroke-linejoin="round" />
<polygon points="732.2,782.1 737.4,787.4 730,793.1 724.9,787.8" fill="#62c4fa" stroke="#08141c" stroke-width="0.6" stroke-linejoin="round" />
<polygon points="679.2,794 686.6,801.8 688.2,793.6 683.1,788.2" fill="#2c6592" stroke="#08141c" stroke-width="0.8" stroke-linejoin="round" />
<polygon points="698,793 686.6,801.8 688.2,793.6 695.5,788.1" fill="#245478" stroke="#08141c" stroke-width="0.8" stroke-linejoin="round" />
<polygon points="690.7,785.2 679.2,794 683.1,788.2 690.3,782.7" fill="#3f7fb0" stroke="#08141c" stroke-width="0.5" stroke-linejoin="round" />
<polygon points="690.3,782.7 695.5,788.1 688.2,793.6 683.1,788.2" fill="#62c4fa" stroke="#08141c" stroke-width="0.6" stroke-linejoin="round" />
<polygon points="774.1,795.3 781.7,802.8 783.4,794.6 778.1,789.4" fill="#2c6592" stroke="#08141c" stroke-width="0.8" stroke-linejoin="round" />
<polygon points="793.1,793.9 781.7,802.8 783.4,794.6 790.4,789.1" fill="#245478" stroke="#08141c" stroke-width="0.8" stroke-linejoin="round" />
<polygon points="785.4,786.4 774.1,795.3 778.1,789.4 785.1,783.9" fill="#3f7fb0" stroke="#08141c" stroke-width="0.5" stroke-linejoin="round" />
<polygon points="785.1,783.9 790.4,789.1 783.4,794.6 778.1,789.4" fill="#62c4fa" stroke="#08141c" stroke-width="0.6" stroke-linejoin="round" />
<polygon points="745,796.2 752.4,803.7 754.1,795.5 748.9,790.3" fill="#2c6592" stroke="#08141c" stroke-width="0.8" stroke-linejoin="round" />
<polygon points="764.1,794.6 752.4,803.7 754.1,795.5 761.5,789.8" fill="#245478" stroke="#08141c" stroke-width="0.8" stroke-linejoin="round" />
<polygon points="756.6,787.1 745,796.2 748.9,790.3 756.3,784.5" fill="#3f7fb0" stroke="#08141c" stroke-width="0.5" stroke-linejoin="round" />
<polygon points="756.3,784.5 761.5,789.8 754.1,795.5 748.9,790.3" fill="#62c4fa" stroke="#08141c" stroke-width="0.6" stroke-linejoin="round" />
<polygon points="702.9,797 710.3,804.7 712,796.5 706.9,791.2" fill="#2c6592" stroke="#08141c" stroke-width="0.8" stroke-linejoin="round" />
<polygon points="721.8,795.7 710.3,804.7 712,796.5 719.3,790.8" fill="#245478" stroke="#08141c" stroke-width="0.8" stroke-linejoin="round" />
<polygon points="714.4,788.1 702.9,797 706.9,791.2 714.1,785.5" fill="#3f7fb0" stroke="#08141c" stroke-width="0.5" stroke-linejoin="round" />
<polygon points="714.1,785.5 719.3,790.8 712,796.5 706.9,791.2" fill="#62c4fa" stroke="#08141c" stroke-width="0.6" stroke-linejoin="round" />
<polygon points="728.8,801.7 736.2,809.4 737.9,801.2 732.7,795.8" fill="#2c6592" stroke="#08141c" stroke-width="0.8" stroke-linejoin="round" />
<polygon points="747.8,800.3 736.2,809.4 737.9,801.2 745.2,795.4" fill="#245478" stroke="#08141c" stroke-width="0.8" stroke-linejoin="round" />
<polygon points="740.4,792.7 728.8,801.7 732.7,795.8 740.1,790.1" fill="#3f7fb0" stroke="#08141c" stroke-width="0.5" stroke-linejoin="round" />
<polygon points="740.1,790.1 745.2,795.4 737.9,801.2 732.7,795.8" fill="#62c4fa" stroke="#08141c" stroke-width="0.6" stroke-linejoin="round" />
<polygon points="686.9,802.2 694.3,810.1 695.9,801.9 690.8,796.5" fill="#2c6592" stroke="#08141c" stroke-width="0.8" stroke-linejoin="round" />
<polygon points="705.8,801.1 694.3,810.1 695.9,801.9 703.2,796.2" fill="#245478" stroke="#08141c" stroke-width="0.8" stroke-linejoin="round" />
<polygon points="698.4,793.4 686.9,802.2 690.8,796.5 698.1,790.8" fill="#3f7fb0" stroke="#08141c" stroke-width="0.5" stroke-linejoin="round" />
<polygon points="698.1,790.8 703.2,796.2 695.9,801.9 690.8,796.5" fill="#62c4fa" stroke="#08141c" stroke-width="0.6" stroke-linejoin="round" />
<polygon points="782.1,803.2 789.7,810.7 791.4,802.5 786.1,797.3" fill="#2c6592" stroke="#08141c" stroke-width="0.8" stroke-linejoin="round" />
<polygon points="801.1,801.7 789.7,810.7 791.4,802.5 798.4,796.9" fill="#245478" stroke="#08141c" stroke-width="0.8" stroke-linejoin="round" />
<polygon points="793.5,794.3 782.1,803.2 786.1,797.3 793.2,791.7" fill="#3f7fb0" stroke="#08141c" stroke-width="0.5" stroke-linejoin="round" />
<polygon points="793.2,791.7 798.4,796.9 791.4,802.5 786.1,797.3" fill="#62c4fa" stroke="#08141c" stroke-width="0.6" stroke-linejoin="round" />
<polygon points="752.9,804.2 760.3,811.7 762,803.5 756.8,798.3" fill="#2c6592" stroke="#08141c" stroke-width="0.8" stroke-linejoin="round" />
<polygon points="772.1,802.5 760.3,811.7 762,803.5 769.5,797.7" fill="#245478" stroke="#08141c" stroke-width="0.8" stroke-linejoin="round" />
<polygon points="764.5,795 752.9,804.2 756.8,798.3 764.2,792.5" fill="#3f7fb0" stroke="#08141c" stroke-width="0.5" stroke-linejoin="round" />
<polygon points="764.2,792.5 769.5,797.7 762,803.5 756.8,798.3" fill="#62c4fa" stroke="#08141c" stroke-width="0.6" stroke-linejoin="round" />
<polygon points="710.7,805.1 718.1,812.9 719.8,804.7 714.6,799.3" fill="#2c6592" stroke="#08141c" stroke-width="0.8" stroke-linejoin="round" />
<polygon points="729.7,803.8 718.1,812.9 719.8,804.7 727.1,798.9" fill="#245478" stroke="#08141c" stroke-width="0.8" stroke-linejoin="round" />
<polygon points="722.3,796.1 710.7,805.1 714.6,799.3 721.9,793.6" fill="#3f7fb0" stroke="#08141c" stroke-width="0.5" stroke-linejoin="round" />
<polygon points="721.9,793.6 727.1,798.9 719.8,804.7 714.6,799.3" fill="#62c4fa" stroke="#08141c" stroke-width="0.6" stroke-linejoin="round" />
<polygon points="644.3,778.3 701.2,840.3 702.9,832.1 648.1,772.6" fill="#2c6592" stroke="#08141c" stroke-width="0.8" stroke-linejoin="round" />
<polygon points="712.8,831.2 701.2,840.3 702.9,832.1 710.3,826.3" fill="#245478" stroke="#08141c" stroke-width="0.8" stroke-linejoin="round" />
<polygon points="655.5,769.8 644.3,778.3 648.1,772.6 655.2,767.2" fill="#3f7fb0" stroke="#08141c" stroke-width="0.5" stroke-linejoin="round" />
<polygon points="655.2,767.2 710.3,826.3 702.9,832.1 648.1,772.6" fill="#62c4fa" stroke="#08141c" stroke-width="0.6" stroke-linejoin="round" />
<polygon points="736.6,809.8 744,817.4 745.7,809.2 740.6,803.9" fill="#2c6592" stroke="#08141c" stroke-width="0.8" stroke-linejoin="round" />
<polygon points="755.7,808.3 744,817.4 745.7,809.2 753.1,803.4" fill="#245478" stroke="#08141c" stroke-width="0.8" stroke-linejoin="round" />
<polygon points="748.3,800.7 736.6,809.8 740.6,803.9 747.9,798.1" fill="#3f7fb0" stroke="#08141c" stroke-width="0.5" stroke-linejoin="round" />
<polygon points="747.9,798.1 753.1,803.4 745.7,809.2 740.6,803.9" fill="#62c4fa" stroke="#08141c" stroke-width="0.6" stroke-linejoin="round" />
<polygon points="694.6,810.5 702,818.3 703.6,810.1 698.6,804.7" fill="#2c6592" stroke="#08141c" stroke-width="0.8" stroke-linejoin="round" />
<polygon points="713.5,809.3 702,818.3 703.6,810.1 711,804.4" fill="#245478" stroke="#08141c" stroke-width="0.8" stroke-linejoin="round" />
<polygon points="706.2,801.5 694.6,810.5 698.6,804.7 705.9,799" fill="#3f7fb0" stroke="#08141c" stroke-width="0.5" stroke-linejoin="round" />
<polygon points="705.9,799 711,804.4 703.6,810.1 698.6,804.7" fill="#62c4fa" stroke="#08141c" stroke-width="0.6" stroke-linejoin="round" />
<polygon points="760.7,812.2 768.2,819.7 769.9,811.5 764.7,806.2" fill="#2c6592" stroke="#08141c" stroke-width="0.8" stroke-linejoin="round" />
<polygon points="780,810.4 768.2,819.7 769.9,811.5 777.4,805.6" fill="#245478" stroke="#08141c" stroke-width="0.8" stroke-linejoin="round" />
<polygon points="772.5,802.9 760.7,812.2 764.7,806.2 772.2,800.4" fill="#3f7fb0" stroke="#08141c" stroke-width="0.5" stroke-linejoin="round" />
<polygon points="772.2,800.4 777.4,805.6 769.9,811.5 764.7,806.2" fill="#62c4fa" stroke="#08141c" stroke-width="0.6" stroke-linejoin="round" />
<polygon points="718.5,813.3 725.8,821 727.5,812.8 722.4,807.4" fill="#2c6592" stroke="#08141c" stroke-width="0.8" stroke-linejoin="round" />
<polygon points="737.5,811.9 725.8,821 727.5,812.8 734.9,807" fill="#245478" stroke="#08141c" stroke-width="0.8" stroke-linejoin="round" />
<polygon points="730.1,804.2 718.5,813.3 722.4,807.4 729.8,801.7" fill="#3f7fb0" stroke="#08141c" stroke-width="0.5" stroke-linejoin="round" />
<polygon points="729.8,801.7 734.9,807 727.5,812.8 722.4,807.4" fill="#62c4fa" stroke="#08141c" stroke-width="0.6" stroke-linejoin="round" />
<polygon points="744.4,817.9 751.8,825.5 753.6,817.3 748.4,812" fill="#2c6592" stroke="#08141c" stroke-width="0.8" stroke-linejoin="round" />
<polygon points="763.6,816.3 751.8,825.5 753.6,817.3 761,811.4" fill="#245478" stroke="#08141c" stroke-width="0.8" stroke-linejoin="round" />
<polygon points="756.1,808.7 744.4,817.9 748.4,812 755.8,806.2" fill="#3f7fb0" stroke="#08141c" stroke-width="0.5" stroke-linejoin="round" />
<polygon points="755.8,806.2 761,811.4 753.6,817.3 748.4,812" fill="#62c4fa" stroke="#08141c" stroke-width="0.6" stroke-linejoin="round" />
<polygon points="702.3,818.7 709.7,826.5 711.4,818.3 706.3,812.9" fill="#2c6592" stroke="#08141c" stroke-width="0.8" stroke-linejoin="round" />
<polygon points="721.3,817.5 709.7,826.5 711.4,818.3 718.7,812.6" fill="#245478" stroke="#08141c" stroke-width="0.8" stroke-linejoin="round" />
<polygon points="713.9,809.7 702.3,818.7 706.3,812.9 713.6,807.2" fill="#3f7fb0" stroke="#08141c" stroke-width="0.5" stroke-linejoin="round" />
<polygon points="713.6,807.2 718.7,812.6 711.4,818.3 706.3,812.9" fill="#62c4fa" stroke="#08141c" stroke-width="0.6" stroke-linejoin="round" />
<polygon points="726.2,821.4 733.6,829.2 735.3,820.9 730.2,815.6" fill="#2c6592" stroke="#08141c" stroke-width="0.8" stroke-linejoin="round" />
<polygon points="745.3,820 733.6,829.2 735.3,820.9 742.7,815.1" fill="#245478" stroke="#08141c" stroke-width="0.8" stroke-linejoin="round" />
<polygon points="737.9,812.3 726.2,821.4 730.2,815.6 737.6,809.8" fill="#3f7fb0" stroke="#08141c" stroke-width="0.5" stroke-linejoin="round" />
<polygon points="737.6,809.8 742.7,815.1 735.3,820.9 730.2,815.6" fill="#62c4fa" stroke="#08141c" stroke-width="0.6" stroke-linejoin="round" />
<polygon points="710,827 717.4,834.8 719.1,826.5 714,821.1" fill="#2c6592" stroke="#08141c" stroke-width="0.8" stroke-linejoin="round" />
<polygon points="729,825.6 717.4,834.8 719.1,826.5 726.5,820.8" fill="#245478" stroke="#08141c" stroke-width="0.8" stroke-linejoin="round" />
<polygon points="721.7,817.9 710,827 714,821.1 721.4,815.4" fill="#3f7fb0" stroke="#08141c" stroke-width="0.5" stroke-linejoin="round" />
<polygon points="721.4,815.4 726.5,820.8 719.1,826.5 714,821.1" fill="#62c4fa" stroke="#08141c" stroke-width="0.6" stroke-linejoin="round" />
<polygon points="774.7,826.3 785.3,837.1 787.1,828.8 778.7,820.3" fill="#2c6592" stroke="#08141c" stroke-width="0.8" stroke-linejoin="round" />
<polygon points="797.3,827.6 785.3,837.1 787.1,828.8 794.6,822.8" fill="#245478" stroke="#08141c" stroke-width="0.8" stroke-linejoin="round" />
<polygon points="786.5,816.9 774.7,826.3 778.7,820.3 786.2,814.4" fill="#3f7fb0" stroke="#08141c" stroke-width="0.5" stroke-linejoin="round" />
<polygon points="786.2,814.4 794.6,822.8 787.1,828.8 778.7,820.3" fill="#62c4fa" stroke="#08141c" stroke-width="0.6" stroke-linejoin="round" />
<polygon points="738.3,834.1 744.1,840.2 745.8,831.9 742.2,828.2" fill="#2c6592" stroke="#08141c" stroke-width="0.8" stroke-linejoin="round" />
<polygon points="768.3,821.1 744.1,840.2 745.8,831.9 765.7,816.2" fill="#245478" stroke="#08141c" stroke-width="0.8" stroke-linejoin="round" />
<polygon points="762.4,815.1 738.3,834.1 742.2,828.2 762.1,812.6" fill="#3f7fb0" stroke="#08141c" stroke-width="0.5" stroke-linejoin="round" />
<polygon points="762.1,812.6 765.7,816.2 745.8,831.9 742.2,828.2" fill="#62c4fa" stroke="#08141c" stroke-width="0.6" stroke-linejoin="round" />
<polygon points="717.7,835.2 728.9,847.2 730.6,838.9 721.7,829.3" fill="#2c6592" stroke="#08141c" stroke-width="0.8" stroke-linejoin="round" />
<polygon points="740.7,837.9 728.9,847.2 730.6,838.9 738.1,833" fill="#245478" stroke="#08141c" stroke-width="0.8" stroke-linejoin="round" />
<polygon points="729.4,826 717.7,835.2 721.7,829.3 729.1,823.5" fill="#3f7fb0" stroke="#08141c" stroke-width="0.5" stroke-linejoin="round" />
<polygon points="729.1,823.5 738.1,833 730.6,838.9 721.7,829.3" fill="#62c4fa" stroke="#08141c" stroke-width="0.6" stroke-linejoin="round" />
<polygon points="762.1,836.2 772.7,847.1 774.5,838.8 766.1,830.2" fill="#2c6592" stroke="#08141c" stroke-width="0.8" stroke-linejoin="round" />
<polygon points="784.7,837.6 772.7,847.1 774.5,838.8 782,832.8" fill="#245478" stroke="#08141c" stroke-width="0.8" stroke-linejoin="round" />
<polygon points="774,826.8 762.1,836.2 766.1,830.2 773.6,824.3" fill="#3f7fb0" stroke="#08141c" stroke-width="0.5" stroke-linejoin="round" />
<polygon points="773.6,824.3 782,832.8 774.5,838.8 766.1,830.2" fill="#62c4fa" stroke="#08141c" stroke-width="0.6" stroke-linejoin="round" />
<polygon points="785.7,837.5 796.4,848.4 798.2,840 789.8,831.5" fill="#2c6592" stroke="#08141c" stroke-width="0.8" stroke-linejoin="round" />
<polygon points="808.4,838.8 796.4,848.4 798.2,840 805.8,834" fill="#245478" stroke="#08141c" stroke-width="0.8" stroke-linejoin="round" />
<polygon points="797.7,828 785.7,837.5 789.8,831.5 797.3,825.6" fill="#3f7fb0" stroke="#08141c" stroke-width="0.5" stroke-linejoin="round" />
<polygon points="797.3,825.6 805.8,834 798.2,840 789.8,831.5" fill="#62c4fa" stroke="#08141c" stroke-width="0.6" stroke-linejoin="round" />
<polygon points="701.6,840.7 710.7,850.7 712.5,842.4 705.5,834.9" fill="#2c6592" stroke="#08141c" stroke-width="0.8" stroke-linejoin="round" />
<polygon points="722.5,841.5 710.7,850.7 712.5,842.4 719.9,836.6" fill="#245478" stroke="#08141c" stroke-width="0.8" stroke-linejoin="round" />
<polygon points="713.2,831.6 701.6,840.7 705.5,834.9 712.9,829.1" fill="#3f7fb0" stroke="#08141c" stroke-width="0.5" stroke-linejoin="round" />
<polygon points="712.9,829.1 719.9,836.6 712.5,842.4 705.5,834.9" fill="#62c4fa" stroke="#08141c" stroke-width="0.6" stroke-linejoin="round" />
<polygon points="749.6,846 760.1,857.1 761.9,848.8 753.6,840.1" fill="#2c6592" stroke="#08141c" stroke-width="0.8" stroke-linejoin="round" />
<polygon points="772.1,847.6 760.1,857.1 761.9,848.8 769.4,842.8" fill="#245478" stroke="#08141c" stroke-width="0.8" stroke-linejoin="round" />
<polygon points="761.5,836.7 749.6,846 753.6,840.1 761.1,834.2" fill="#3f7fb0" stroke="#08141c" stroke-width="0.5" stroke-linejoin="round" />
<polygon points="761.1,834.2 769.4,842.8 761.9,848.8 753.6,840.1" fill="#62c4fa" stroke="#08141c" stroke-width="0.6" stroke-linejoin="round" />
<polygon points="773.1,847.5 783.7,858.5 785.5,850.1 777.2,841.6" fill="#2c6592" stroke="#08141c" stroke-width="0.8" stroke-linejoin="round" />
<polygon points="795.7,848.9 783.7,858.5 785.5,850.1 793.1,844.1" fill="#245478" stroke="#08141c" stroke-width="0.8" stroke-linejoin="round" />
<polygon points="785.1,838.1 773.1,847.5 777.2,841.6 784.7,835.6" fill="#3f7fb0" stroke="#08141c" stroke-width="0.5" stroke-linejoin="round" />
<polygon points="784.7,835.6 793.1,844.1 785.5,850.1 777.2,841.6" fill="#62c4fa" stroke="#08141c" stroke-width="0.6" stroke-linejoin="round" />
<polygon points="796.8,848.8 807.5,859.6 809.3,851.3 800.9,842.8" fill="#2c6592" stroke="#08141c" stroke-width="0.8" stroke-linejoin="round" />
<polygon points="819.6,849.9 807.5,859.6 809.3,851.3 816.9,845.1" fill="#245478" stroke="#08141c" stroke-width="0.8" stroke-linejoin="round" />
<polygon points="808.8,839.2 796.8,848.8 800.9,842.8 808.5,836.7" fill="#3f7fb0" stroke="#08141c" stroke-width="0.5" stroke-linejoin="round" />
<polygon points="808.5,836.7 816.9,845.1 809.3,851.3 800.9,842.8" fill="#62c4fa" stroke="#08141c" stroke-width="0.6" stroke-linejoin="round" />
<polygon points="711.1,851.1 718.4,859 720.1,850.7 715.1,845.3" fill="#2c6592" stroke="#08141c" stroke-width="0.8" stroke-linejoin="round" />
<polygon points="730.2,849.7 718.4,859 720.1,850.7 727.6,844.9" fill="#245478" stroke="#08141c" stroke-width="0.8" stroke-linejoin="round" />
<polygon points="722.9,841.9 711.1,851.1 715.1,845.3 722.5,839.4" fill="#3f7fb0" stroke="#08141c" stroke-width="0.5" stroke-linejoin="round" />
<polygon points="722.5,839.4 727.6,844.9 720.1,850.7 715.1,845.3" fill="#62c4fa" stroke="#08141c" stroke-width="0.6" stroke-linejoin="round" />
<polygon points="737.1,855.9 747.5,867.1 749.3,858.8 741.1,850" fill="#2c6592" stroke="#08141c" stroke-width="0.8" stroke-linejoin="round" />
<polygon points="759.5,857.6 747.5,867.1 749.3,858.8 756.9,852.8" fill="#245478" stroke="#08141c" stroke-width="0.8" stroke-linejoin="round" />
<polygon points="749,846.6 737.1,855.9 741.1,850 748.6,844.1" fill="#3f7fb0" stroke="#08141c" stroke-width="0.5" stroke-linejoin="round" />
<polygon points="748.6,844.1 756.9,852.8 749.3,858.8 741.1,850" fill="#62c4fa" stroke="#08141c" stroke-width="0.6" stroke-linejoin="round" />
<polygon points="760.5,857.5 771,868.6 772.8,860.2 764.6,851.6" fill="#2c6592" stroke="#08141c" stroke-width="0.8" stroke-linejoin="round" />
<polygon points="783.1,859 771,868.6 772.8,860.2 780.4,854.2" fill="#245478" stroke="#08141c" stroke-width="0.8" stroke-linejoin="round" />
<polygon points="772.5,848.1 760.5,857.5 764.6,851.6 772.1,845.6" fill="#3f7fb0" stroke="#08141c" stroke-width="0.5" stroke-linejoin="round" />
<polygon points="772.1,845.6 780.4,854.2 772.8,860.2 764.6,851.6" fill="#62c4fa" stroke="#08141c" stroke-width="0.6" stroke-linejoin="round" />
<polygon points="784.1,858.9 794.7,869.8 796.5,861.5 788.2,852.9" fill="#2c6592" stroke="#08141c" stroke-width="0.8" stroke-linejoin="round" />
<polygon points="806.8,860.1 794.7,869.8 796.5,861.5 804.2,855.4" fill="#245478" stroke="#08141c" stroke-width="0.8" stroke-linejoin="round" />
<polygon points="796.1,849.3 784.1,858.9 788.2,852.9 795.8,846.8" fill="#3f7fb0" stroke="#08141c" stroke-width="0.5" stroke-linejoin="round" />
<polygon points="795.8,846.8 804.2,855.4 796.5,861.5 788.2,852.9" fill="#62c4fa" stroke="#08141c" stroke-width="0.6" stroke-linejoin="round" />
<polygon points="807.9,860 818.6,870.8 820.4,862.5 812,854" fill="#2c6592" stroke="#08141c" stroke-width="0.8" stroke-linejoin="round" />
<polygon points="830.8,861.1 818.6,870.8 820.4,862.5 828.1,856.3" fill="#245478" stroke="#08141c" stroke-width="0.8" stroke-linejoin="round" />
<polygon points="820,850.3 807.9,860 812,854 819.6,847.9" fill="#3f7fb0" stroke="#08141c" stroke-width="0.5" stroke-linejoin="round" />
<polygon points="819.6,847.9 828.1,856.3 820.4,862.5 812,854" fill="#62c4fa" stroke="#08141c" stroke-width="0.6" stroke-linejoin="round" />
<polygon points="747.9,867.5 758.4,878.7 760.2,870.3 751.9,861.6" fill="#2c6592" stroke="#08141c" stroke-width="0.8" stroke-linejoin="round" />
<polygon points="770.4,869.1 758.4,878.7 760.2,870.3 767.7,864.3" fill="#245478" stroke="#08141c" stroke-width="0.8" stroke-linejoin="round" />
<polygon points="759.9,858.1 747.9,867.5 751.9,861.6 759.5,855.6" fill="#3f7fb0" stroke="#08141c" stroke-width="0.5" stroke-linejoin="round" />
<polygon points="759.5,855.6 767.7,864.3 760.2,870.3 751.9,861.6" fill="#62c4fa" stroke="#08141c" stroke-width="0.6" stroke-linejoin="round" />
<polygon points="771.4,869 782,880 783.8,871.7 775.5,863" fill="#2c6592" stroke="#08141c" stroke-width="0.8" stroke-linejoin="round" />
<polygon points="794,870.4 782,880 783.8,871.7 791.4,865.6" fill="#245478" stroke="#08141c" stroke-width="0.8" stroke-linejoin="round" />
<polygon points="783.5,859.4 771.4,869 775.5,863 783.1,857" fill="#3f7fb0" stroke="#08141c" stroke-width="0.5" stroke-linejoin="round" />
<polygon points="783.1,857 791.4,865.6 783.8,871.7 775.5,863" fill="#62c4fa" stroke="#08141c" stroke-width="0.6" stroke-linejoin="round" />
<polygon points="795.1,870.2 805.7,881.2 807.5,872.8 799.2,864.2" fill="#2c6592" stroke="#08141c" stroke-width="0.8" stroke-linejoin="round" />
<polygon points="817.9,871.4 805.7,881.2 807.5,872.8 815.2,866.6" fill="#245478" stroke="#08141c" stroke-width="0.8" stroke-linejoin="round" />
<polygon points="807.2,860.6 795.1,870.2 799.2,864.2 806.9,858.1" fill="#3f7fb0" stroke="#08141c" stroke-width="0.5" stroke-linejoin="round" />
<polygon points="806.9,858.1 815.2,866.6 807.5,872.8 799.2,864.2" fill="#62c4fa" stroke="#08141c" stroke-width="0.6" stroke-linejoin="round" />
<polygon points="724.6,865.8 745.7,888.8 747.5,880.4 728.6,859.9" fill="#2c6592" stroke="#08141c" stroke-width="0.8" stroke-linejoin="round" />
<polygon points="757.7,879.2 745.7,888.8 747.5,880.4 755.1,874.4" fill="#245478" stroke="#08141c" stroke-width="0.8" stroke-linejoin="round" />
<polygon points="736.4,856.5 724.6,865.8 728.6,859.9 736.1,854" fill="#3f7fb0" stroke="#08141c" stroke-width="0.5" stroke-linejoin="round" />
<polygon points="736.1,854 755.1,874.4 747.5,880.4 728.6,859.9" fill="#62c4fa" stroke="#08141c" stroke-width="0.6" stroke-linejoin="round" />
<polygon points="758.8,879.1 769.2,890.3 771,881.9 762.8,873.1" fill="#2c6592" stroke="#08141c" stroke-width="0.8" stroke-linejoin="round" />
<polygon points="781.3,880.6 769.2,890.3 771,881.9 778.6,875.8" fill="#245478" stroke="#08141c" stroke-width="0.8" stroke-linejoin="round" />
<polygon points="770.8,869.5 758.8,879.1 762.8,873.1 770.4,867.1" fill="#3f7fb0" stroke="#08141c" stroke-width="0.5" stroke-linejoin="round" />
<polygon points="770.4,867.1 778.6,875.8 771,881.9 762.8,873.1" fill="#62c4fa" stroke="#08141c" stroke-width="0.6" stroke-linejoin="round" />
<polygon points="782.4,880.5 792.9,891.5 794.7,883.1 786.4,874.5" fill="#2c6592" stroke="#08141c" stroke-width="0.8" stroke-linejoin="round" />
<polygon points="805,881.7 792.9,891.5 794.7,883.1 802.4,876.9" fill="#245478" stroke="#08141c" stroke-width="0.8" stroke-linejoin="round" />
<polygon points="794.4,870.8 782.4,880.5 786.4,874.5 794.1,868.3" fill="#3f7fb0" stroke="#08141c" stroke-width="0.5" stroke-linejoin="round" />
<polygon points="794.1,868.3 802.4,876.9 794.7,883.1 786.4,874.5" fill="#62c4fa" stroke="#08141c" stroke-width="0.6" stroke-linejoin="round" />
<polygon points="746.1,889.2 756.4,900.5 758.2,892.1 750.1,883.3" fill="#2c6592" stroke="#08141c" stroke-width="0.8" stroke-linejoin="round" />
<polygon points="768.5,890.8 756.4,900.5 758.2,892.1 765.9,886" fill="#245478" stroke="#08141c" stroke-width="0.8" stroke-linejoin="round" />
<polygon points="758.1,879.6 746.1,889.2 750.1,883.3 757.7,877.2" fill="#3f7fb0" stroke="#08141c" stroke-width="0.5" stroke-linejoin="round" />
<polygon points="757.7,877.2 765.9,886 758.2,892.1 750.1,883.3" fill="#62c4fa" stroke="#08141c" stroke-width="0.6" stroke-linejoin="round" />
<polygon points="769.6,890.7 780,901.9 781.8,893.5 773.6,884.7" fill="#2c6592" stroke="#08141c" stroke-width="0.8" stroke-linejoin="round" />
<polygon points="792.2,892.1 780,901.9 781.8,893.5 789.5,887.3" fill="#245478" stroke="#08141c" stroke-width="0.8" stroke-linejoin="round" />
<polygon points="781.7,881 769.6,890.7 773.6,884.7 781.3,878.6" fill="#3f7fb0" stroke="#08141c" stroke-width="0.5" stroke-linejoin="round" />
<polygon points="781.3,878.6 789.5,887.3 781.8,893.5 773.6,884.7" fill="#62c4fa" stroke="#08141c" stroke-width="0.6" stroke-linejoin="round" />
<polygon points="756.8,900.9 767.1,912.2 769,903.8 760.8,894.9" fill="#2c6592" stroke="#08141c" stroke-width="0.8" stroke-linejoin="round" />
<polygon points="779.3,902.4 767.1,912.2 769,903.8 776.7,897.6" fill="#245478" stroke="#08141c" stroke-width="0.8" stroke-linejoin="round" />
<polygon points="768.9,891.2 756.8,900.9 760.8,894.9 768.5,888.8" fill="#3f7fb0" stroke="#08141c" stroke-width="0.5" stroke-linejoin="round" />
<polygon points="768.5,888.8 776.7,897.6 769,903.8 760.8,894.9" fill="#62c4fa" stroke="#08141c" stroke-width="0.6" stroke-linejoin="round" />
<polygon points="430.7,840.5 590.3,1053.3 720.4,958.7 714.5,946.9 593.3,1041.5" fill="#000" opacity="0.3" filter="url(#b4)"/>
<polygon points="512,790.3 627.3,924.7 562.2,976.5 556.2,969.5 618.3,922.7 509,796.3" fill="#000" opacity="0.22" filter="url(#b2)"/>
<polygon points="646.5,923.3 680.5,960.2 596.2,1022.3 590.2,1015.3 671.5,958.2 643.5,929.3" fill="#000" opacity="0.22" filter="url(#b2)"/>
<polygon points="534.2,774 574.1,821.3 562.2,830.2 556.2,823.2 565.1,819.3 531.2,780" fill="#000" opacity="0.22" filter="url(#b2)"/>
<polygon points="581.4,828.7 624.3,881.9 612.5,890.8 606.5,883.8 615.3,879.9 578.4,834.7" fill="#000" opacity="0.22" filter="url(#b2)"/>
<polygon points="631.7,890.2 646.5,908.5 634.7,917.4 628.7,910.4 637.5,906.5 628.7,896.2" fill="#000" opacity="0.22" filter="url(#b2)"/>
<path d="M432.0 842.7 Q427.1 836.4 433.7 831.8 L535.0 760.3 Q541.5 755.7 546.8 761.7 L709.2 947.4 Q714.5 953.4 708.1 958.3 L595.2 1045.5 Q588.8 1050.4 584.0 1044.0 Z M449.9 833.1 L512.0 790.3 L627.3 924.7 L562.2 976.5 Z M565.2 983.9 L646.5 923.3 L680.5 960.2 L596.2 1022.3 Z M522.3 781.4 L534.2 774.0 L574.1 821.3 L562.2 830.2 Z M568.1 837.5 L581.4 828.7 L624.3 881.9 L612.5 890.8 Z M619.9 898.1 L631.7 890.2 L646.5 908.5 L634.7 917.4 Z " fill="#23516f" stroke="#08141c" stroke-width="1" fill-rule="evenodd" stroke-linejoin="round"/>
<path d="M432.0 840.4 Q427.1 834.0 433.7 829.4 L535.0 757.9 Q541.5 753.3 546.8 759.3 L709.2 943.9 Q714.5 949.9 708.1 954.8 L595.2 1041.9 Q588.8 1046.8 584.0 1040.5 Z M449.9 833.1 L512.0 790.3 L627.3 924.7 L562.2 976.5 Z M565.2 983.9 L646.5 923.3 L680.5 960.2 L596.2 1022.3 Z M522.3 781.4 L534.2 774.0 L574.1 821.3 L562.2 830.2 Z M568.1 837.5 L581.4 828.7 L624.3 881.9 L612.5 890.8 Z M619.9 898.1 L631.7 890.2 L646.5 908.5 L634.7 917.4 Z " fill="#66c9fc" stroke="#08141c" stroke-width="1" fill-rule="evenodd" stroke-linejoin="round"/>
<polygon points="449.9,833.1 512,790.3 513.5,793.3 452.4,835.3" fill="#1f4560" stroke="#08141c" stroke-width="0.6" stroke-linejoin="round" />
<polygon points="565.2,983.9 646.5,923.3 648,926.3 567.7,986.1" fill="#1f4560" stroke="#08141c" stroke-width="0.6" stroke-linejoin="round" />
<polygon points="522.3,781.4 534.2,774 535.7,777 524.8,783.6" fill="#1f4560" stroke="#08141c" stroke-width="0.6" stroke-linejoin="round" />
<polygon points="568.1,837.5 581.4,828.7 582.9,831.7 570.6,839.7" fill="#1f4560" stroke="#08141c" stroke-width="0.6" stroke-linejoin="round" />
<polygon points="619.9,898.1 631.7,890.2 633.2,893.2 622.4,900.3" fill="#1f4560" stroke="#08141c" stroke-width="0.6" stroke-linejoin="round" />
<polyline points="430.1,834 449.9,833.1" fill="none" stroke="#08141c" stroke-width="0.7" stroke-linejoin="round" stroke-linecap="round" />
<polyline points="589.4,1044.5 596.2,1022.3" fill="none" stroke="#08141c" stroke-width="0.7" stroke-linejoin="round" stroke-linecap="round" />
<polyline points="540.4,756.3 534.2,763.6" fill="none" stroke="#08141c" stroke-width="0.7" stroke-linejoin="round" stroke-linecap="round" />
<polygon points="532.7,763.6 540.1,760.7 709.1,944 693.8,955.2" fill="#66c9fc" stroke="#08141c" stroke-width="0.8" stroke-linejoin="round" />
<polygon points="532.7,763.6 537.1,769 633.2,874.5 630.2,877.5" fill="#3a86bd" stroke="#08141c" stroke-width="0.6" stroke-linejoin="round" />
<polygon points="630.2,877.5 693.8,955.2 698.2,951.6 634.7,873.6" fill="#4a9ad2" stroke="#08141c" stroke-width="0.6" stroke-linejoin="round" />
<polygon points="687.9,950.5 697.3,946.9 702.6,953.4 693.8,957.3" fill="#2a5f88" stroke="#08141c" stroke-width="0.7" stroke-linejoin="round" />
<polygon points="1240.6,786.3 1275.1,761.9 1289.5,774.8 1249.2,800.7" fill="#000" opacity="0.12" filter="url(#b4)"/>
<polygon points="1214.7,838.1 1240.6,829.5 1260.7,843.9 1231.9,849.6" fill="#000" opacity="0.16" filter="url(#b4)"/>
<polygon points="1214.7,715.8 1218.3,711.5 1275.8,752.5 1275.1,759 1270.8,761.2 1260.7,754.7 1256.4,757.6 1214,725.9" fill="#2b2b2b" stroke="#0c0c0c" stroke-width="0.9" stroke-linejoin="round" />
<polyline points="1215.8,717 1270.1,756.5" fill="none" stroke="#111" stroke-width="1.4" stroke-linejoin="round" stroke-linecap="round" />
<polyline points="1218.3,711.5 1275.4,752.8" fill="none" stroke="#444" stroke-width="0.7" stroke-linejoin="round" stroke-linecap="round" />
<polygon points="1211.1,738.8 1215.4,733.8 1271.5,774.8 1270.8,781.3 1266.5,784.2 1255.7,777 1252.1,779.9 1210.4,748.2" fill="#2b2b2b" stroke="#0c0c0c" stroke-width="0.9" stroke-linejoin="round" />
<polyline points="1212.2,740 1265.8,779.6" fill="none" stroke="#111" stroke-width="1.4" stroke-linejoin="round" stroke-linecap="round" />
<polyline points="1215.4,733.8 1271.1,775.1" fill="none" stroke="#444" stroke-width="0.7" stroke-linejoin="round" stroke-linecap="round" />
<polygon points="1183,730.9 1188.1,728.8 1193.8,733.8 1193.1,738.8 1188.8,740.6 1183.7,736" fill="#3a7fb5" stroke="#08141c" stroke-width="0.7" stroke-linejoin="round" />
<polygon points="1183,730.9 1188.1,728.8 1193.8,733.8 1188.8,736" fill="#61c5ff" stroke="#08141c" stroke-width="0.6" stroke-linejoin="round" />
<polygon points="1180.1,736.7 1185.9,734.5 1187.3,737.7 1181.6,740.3" fill="#61c5ff" stroke="#08141c" stroke-width="0.6" stroke-linejoin="round" />
<polygon points="1179.9,754 1184.9,751.8 1190.6,756.8 1189.9,761.9 1185.6,763.6 1180.6,759" fill="#3a7fb5" stroke="#08141c" stroke-width="0.7" stroke-linejoin="round" />
<polygon points="1179.9,754 1184.9,751.8 1190.6,756.8 1185.6,759" fill="#61c5ff" stroke="#08141c" stroke-width="0.6" stroke-linejoin="round" />
<polygon points="1177,759.7 1182.7,757.6 1184.2,760.7 1178.4,763.3" fill="#61c5ff" stroke="#08141c" stroke-width="0.6" stroke-linejoin="round" />
<polygon points="1223.3,774.8 1227.6,771.7 1242,782.7 1241.3,789.2 1237.7,792.1 1231.9,787.8" fill="#3a86bd" stroke="#08141c" stroke-width="0.8" stroke-linejoin="round" />
<polygon points="1223.3,774.8 1227.6,771.7 1242,782.7 1237.7,785.6" fill="#61c5ff" stroke="#08141c" stroke-width="0.7" stroke-linejoin="round" />
<polygon points="1219,783.5 1226.2,779.1 1231.9,783.5 1231.2,787.8 1224.7,789.9 1219.3,786.3" fill="#3a86bd" stroke="#08141c" stroke-width="0.7" stroke-linejoin="round" />
<polygon points="1219,783.5 1226.2,779.1 1231.9,783.5 1224.7,787.1" fill="#61c5ff" stroke="#08141c" stroke-width="0.6" stroke-linejoin="round" />
<polygon points="1220.1,797.1 1224.5,794 1238.8,805 1238.1,811.5 1234.5,814.4 1228.8,810.1" fill="#3a86bd" stroke="#08141c" stroke-width="0.8" stroke-linejoin="round" />
<polygon points="1220.1,797.1 1224.5,794 1238.8,805 1234.5,807.9" fill="#61c5ff" stroke="#08141c" stroke-width="0.7" stroke-linejoin="round" />
<polygon points="1215.8,805.8 1223,801.4 1228.8,805.8 1228.1,810.1 1221.6,812.2 1216.1,808.6" fill="#3a86bd" stroke="#08141c" stroke-width="0.7" stroke-linejoin="round" />
<polygon points="1215.8,805.8 1223,801.4 1228.8,805.8 1221.6,809.4" fill="#61c5ff" stroke="#08141c" stroke-width="0.6" stroke-linejoin="round" />
<polygon points="1211.1,810.1 1214.4,807.2 1239.9,825.2 1238.4,835.3 1234.8,835.3 1210.4,815.1" fill="#4b4f52" stroke="#111" stroke-width="0.9" stroke-linejoin="round" />
<polygon points="1211.1,810.1 1214.4,807.2 1239.9,825.2 1236.3,827.3" fill="#5f6467" stroke="#111" stroke-width="0.7" stroke-linejoin="round" />
<ellipse cx="1217.6" cy="819.4" rx="4.2" ry="3.8" fill="#6b7073" stroke="#151515" stroke-width="0.8"/>
<ellipse cx="1217.9" cy="818.2" rx="3.2" ry="2.6" fill="#7b8083" stroke="#2a2a2a" stroke-width="0.5"/>
<ellipse cx="1228.3" cy="828.1" rx="4.2" ry="3.8" fill="#6b7073" stroke="#151515" stroke-width="0.8"/>
<ellipse cx="1228.6" cy="826.9" rx="3.2" ry="2.6" fill="#7b8083" stroke="#2a2a2a" stroke-width="0.5"/>
<circle cx="1010" cy="951" r="8.6" fill="none" stroke="#7f9bbd" stroke-width="3.6" opacity="0.7"/>
<path d="M1003 947 L1010 951 L1017 947" fill="none" stroke="#4dbbe8" stroke-width="1.6"/>
</g>
</svg>
<svg class="abs" style="left:0;top:0" width="1928" height="1056" viewBox="0 0 1928 1056">
<defs><linearGradient id="sep" x1="0" y1="0" x2="0" y2="1"><stop offset="0" stop-color="#888" stop-opacity="0"/><stop offset="0.3" stop-color="#888"/><stop offset="0.7" stop-color="#888"/><stop offset="1" stop-color="#888" stop-opacity="0"/></linearGradient><linearGradient id="seph" x1="0" y1="0" x2="1" y2="0"><stop offset="0" stop-color="#777" stop-opacity="0"/><stop offset="0.3" stop-color="#777"/><stop offset="0.7" stop-color="#777"/><stop offset="1" stop-color="#777" stop-opacity="0"/></linearGradient><linearGradient id="lg" x1="0" y1="0" x2="1" y2="1"><stop offset="0" stop-color="#bccbd3"/><stop offset="1" stop-color="#a5b9c4"/></linearGradient><linearGradient id="qb" x1="0" y1="0" x2="0" y2="1"><stop offset="0" stop-color="#f8f8f8"/><stop offset="1" stop-color="#cfcfcf"/></linearGradient><linearGradient id="cubeL" x1="0" y1="0" x2="0" y2="1"><stop offset="0" stop-color="#e3e3e3"/><stop offset="1" stop-color="#f6f6f6"/></linearGradient><linearGradient id="cubeR" x1="0" y1="0" x2="0" y2="1"><stop offset="0" stop-color="#e0e0e0"/><stop offset="1" stop-color="#f2f2f2"/></linearGradient><clipPath id="lgc"><rect x="8" y="39" width="43.5" height="43.5" rx="8.5"/></clipPath></defs>
<polygon points="2,12.6 18,12.2 10,15.9" fill="#b5e1f3"/><polygon points="2,12.6 10,15.9 10,25.2" fill="#12a1d9"/><polygon points="18,12.2 10,15.9 10,25.2" fill="#0f6c93"/>
<g clip-path="url(#lgc)"><rect x="8" y="39" width="44" height="44" fill="url(#lg)"/><polygon points="46.25,49.4 52,55 52,84 37,84 30,75.6" fill="#6c9bb0"/></g><polygon points="13.1,50 46.25,49.4 30,56.25" fill="#b9e5f5"/><polygon points="13.1,50 30,56.25 30,75.6" fill="#0fa0d8"/><polygon points="46.25,49.4 30,56.25 30,75.6" fill="#0e6b92"/>
<path d="M199 62.6 L205 66.6 L211 62.6" fill="none" stroke="#222" stroke-width="2.2" stroke-linecap="round" stroke-linejoin="round"/>
<polygon points="615,58 624.3,52.7 624.3,63.3" fill="#2a2a2a"/><path d="M623.5 58 Q632 56.3 635.6 61.6" fill="none" stroke="#2a2a2a" stroke-width="2.4" stroke-linecap="round"/>
<polygon points="677.8,58 668.6,52.7 668.6,63.3" fill="#b9b9b9"/><path d="M669.4 58 Q661 56.3 657.6 61.8" fill="none" stroke="#b9b9b9" stroke-width="2.4" stroke-linecap="round"/>
<rect x="709.8" y="46" width="1" height="27" fill="url(#sep)"/>
<rect x="795.9" y="46" width="1" height="27" fill="url(#sep)"/>
<rect x="1269" y="46" width="1" height="27" fill="url(#sep)"/>
<path d="M744.5 49.8 H756.5 M744.5 49.8 V69.5 M744.5 69.5 H765 M765 57.5 V69.5" fill="none" stroke="#222" stroke-width="1.1" stroke-dasharray="1.1 1.3"/>
<polygon points="747.2,57.56 753,60.93 753,67.6 747.2,64.24" fill="#6a6a6a" stroke="#2a2a2a" stroke-width="0.8" stroke-linejoin="round"/>
<polygon points="753,60.93 758.8,57.56 758.8,64.24 753,67.6" fill="#2e2e2e" stroke="#2a2a2a" stroke-width="0.8" stroke-linejoin="round"/>
<polygon points="747.2,57.56 753,54.2 758.8,57.56 753,60.93" fill="#fff" stroke="#2a2a2a" stroke-width="0.8" stroke-linejoin="round"/>
<path d="M761.5 46.2 V54.8 M757.2 50.5 H765.8" stroke="#222" stroke-width="1.1" fill="none"/><path d="M761.5 45.2 l-1.7 2 h3.4z M761.5 55.8 l-1.7 -2 h3.4z M756.2 50.5 l2 -1.7 v3.4z M766.8 50.5 l-2 -1.7 v3.4z" fill="#222"/>
<polygon points="771.8,82.7 774.8,80.1 774.8,82.7" fill="#9a9a9a"/>
<circle cx="844.8" cy="54.6" r="6.6" fill="#fff" stroke="#2a2a2a" stroke-width="1.1"/>
<polygon points="829.1,56.65 836.95,61.21 836.95,70 829.1,65.45" fill="#6a6a6a" stroke="#2a2a2a" stroke-width="0.8" stroke-linejoin="round"/>
<polygon points="836.95,61.21 844.8,56.65 844.8,65.45 836.95,70" fill="#2e2e2e" stroke="#2a2a2a" stroke-width="0.8" stroke-linejoin="round"/>
<polygon points="829.1,56.65 836.95,52.1 844.8,56.65 836.95,61.21" fill="#fff" stroke="#2a2a2a" stroke-width="0.8" stroke-linejoin="round"/>
<polygon points="858.2,82.6 861.2,80 861.2,82.6" fill="#9a9a9a"/>
<path d="M882 51.8 C874 49.5 870.5 57 875.8 63.2 C878 65.6 880 67 881.4 67.2" fill="none" stroke="#2a2a2a" stroke-width="1"/><circle cx="883" cy="52.9" r="2" fill="#2a2a2a"/><circle cx="875.8" cy="63.2" r="2" fill="#2a2a2a"/><path d="M894.6 49.6 L886.2 60.8" stroke="#2a2a2a" stroke-width="4.4" fill="none"/><polygon points="884.2,60.2 887.7,62.8 881.3,67" fill="#2a2a2a"/>
<polygon points="901.2,82.6 904.2,80 904.2,82.6" fill="#9a9a9a"/>
<polygon points="918.2,56.68 926.1,61.26 926.1,70 918.2,65.42" fill="#6a6a6a" stroke="#2a2a2a" stroke-width="0.8" stroke-linejoin="round"/>
<polygon points="926.1,61.26 934,56.68 934,65.42 926.1,70" fill="#2e2e2e" stroke="#2a2a2a" stroke-width="0.8" stroke-linejoin="round"/>
<polygon points="918.2,56.68 926.1,52.1 934,56.68 926.1,61.26" fill="#fff" stroke="#2a2a2a" stroke-width="0.8" stroke-linejoin="round"/>
<path d="M934.4 47 L928.6 54.2" stroke="#2a2a2a" stroke-width="2.6" fill="none"/><path d="M928.6 54.2 L926.6 57" stroke="#2a2a2a" stroke-width="1.1"/>
<polygon points="944.1,82.6 947.1,80 947.1,82.6" fill="#9a9a9a"/>
<polygon points="958.1,56.68 966,61.26 966,70 958.1,65.42" fill="#6a6a6a" stroke="#2a2a2a" stroke-width="0.8" stroke-linejoin="round"/>
<polygon points="966,61.26 973.9,56.68 973.9,65.42 966,70" fill="#2e2e2e" stroke="#2a2a2a" stroke-width="0.8" stroke-linejoin="round"/>
<polygon points="958.1,56.68 966,52.1 973.9,56.68 966,61.26" fill="#fff" stroke="#2a2a2a" stroke-width="0.8" stroke-linejoin="round"/>
<path d="M974.4 48.5 V55.7 H981" stroke="#2a2a2a" stroke-width="1.2" fill="none"/><polygon points="974.4,46.6 972.4,49.6 976.4,49.6" fill="#2a2a2a"/><polygon points="983,55.7 980,53.7 980,57.7" fill="#2a2a2a"/>
<polygon points="987.1,82.6 990.1,80 990.1,82.6" fill="#9a9a9a"/>
<polygon points="1003,51.72 1007,54.04 1007,58.6 1003,56.28" fill="#6a6a6a" stroke="#2a2a2a" stroke-width="0.6" stroke-linejoin="round"/>
<polygon points="1007,54.04 1011,51.72 1011,56.28 1007,58.6" fill="#2e2e2e" stroke="#2a2a2a" stroke-width="0.6" stroke-linejoin="round"/>
<polygon points="1003,51.72 1007,49.4 1011,51.72 1007,54.04" fill="#fff" stroke="#2a2a2a" stroke-width="0.6" stroke-linejoin="round"/>
<polygon points="1013.2,51.72 1017.2,54.04 1017.2,58.6 1013.2,56.28" fill="#6a6a6a" stroke="#2a2a2a" stroke-width="0.6" stroke-linejoin="round"/>
<polygon points="1017.2,54.04 1021.2,51.72 1021.2,56.28 1017.2,58.6" fill="#2e2e2e" stroke="#2a2a2a" stroke-width="0.6" stroke-linejoin="round"/>
<polygon points="1013.2,51.72 1017.2,49.4 1021.2,51.72 1017.2,54.04" fill="#fff" stroke="#2a2a2a" stroke-width="0.6" stroke-linejoin="round"/>
<polygon points="1003,61.92 1007,64.24 1007,68.8 1003,66.48" fill="#6a6a6a" stroke="#2a2a2a" stroke-width="0.6" stroke-linejoin="round"/>
<polygon points="1007,64.24 1011,61.92 1011,66.48 1007,68.8" fill="#2e2e2e" stroke="#2a2a2a" stroke-width="0.6" stroke-linejoin="round"/>
<polygon points="1003,61.92 1007,59.6 1011,61.92 1007,64.24" fill="#fff" stroke="#2a2a2a" stroke-width="0.6" stroke-linejoin="round"/>
<polygon points="1013.2,61.92 1017.2,64.24 1017.2,68.8 1013.2,66.48" fill="#6a6a6a" stroke="#2a2a2a" stroke-width="0.6" stroke-linejoin="round"/>
<polygon points="1017.2,64.24 1021.2,61.92 1021.2,66.48 1017.2,68.8" fill="#2e2e2e" stroke="#2a2a2a" stroke-width="0.6" stroke-linejoin="round"/>
<polygon points="1013.2,61.92 1017.2,59.6 1021.2,61.92 1017.2,64.24" fill="#fff" stroke="#2a2a2a" stroke-width="0.6" stroke-linejoin="round"/>
<polygon points="1030.2,82.6 1033.2,80 1033.2,82.6" fill="#9a9a9a"/>
<rect x="1045" y="49.1" width="1.8" height="1.8" fill="#2a2a2a"/>
<rect x="1065.2" y="49.1" width="1.8" height="1.8" fill="#2a2a2a"/>
<rect x="1045" y="69" width="1.8" height="1.8" fill="#2a2a2a"/>
<rect x="1065.2" y="69" width="1.8" height="1.8" fill="#2a2a2a"/>
<circle cx="1059.9" cy="56.2" r="5.3" fill="#fff" stroke="#2a2a2a" stroke-width="1"/>
<polygon points="1047.1,59.36 1052.9,62.73 1052.9,69.1 1047.1,65.74" fill="#6a6a6a" stroke="#2a2a2a" stroke-width="0.8" stroke-linejoin="round"/>
<polygon points="1052.9,62.73 1058.7,59.36 1058.7,65.74 1052.9,69.1" fill="#2e2e2e" stroke="#2a2a2a" stroke-width="0.8" stroke-linejoin="round"/>
<polygon points="1047.1,59.36 1052.9,56 1058.7,59.36 1052.9,62.73" fill="#fff" stroke="#2a2a2a" stroke-width="0.8" stroke-linejoin="round"/>
<polygon points="1073.2,82.7 1076.2,80.1 1076.2,82.7" fill="#9a9a9a"/>
<polygon points="1089,56.5 1101.5,50.2 1108.9,53.8 1108.9,64.5 1098,69.9 1089,65.6" fill="#2e2e2e" stroke="#2a2a2a" stroke-width="0.8" stroke-linejoin="round"/><polygon points="1089,56.5 1098,60.8 1098,69.9 1089,65.6" fill="#6a6a6a"/><polygon points="1089,56.5 1096,52.9 1105,57.2 1098,60.8" fill="#fff" stroke="#2a2a2a" stroke-width="0.7"/><polygon points="1097.5,52.2 1101.5,50.2 1108.9,53.8 1105.5,55.8" fill="#fff" stroke="#2a2a2a" stroke-width="0.7"/>
<polygon points="1116.3,82.7 1119.3,80.1 1119.3,82.7" fill="#9a9a9a"/>
<polygon points="1130.7,52.92 1138.5,57.45 1138.5,69.9 1130.7,65.38" fill="#6a6a6a" stroke="#2a2a2a" stroke-width="0.8" stroke-linejoin="round"/>
<polygon points="1138.5,57.45 1146.3,52.92 1146.3,65.38 1138.5,69.9" fill="#2e2e2e" stroke="#2a2a2a" stroke-width="0.8" stroke-linejoin="round"/>
<polygon points="1130.7,52.92 1138.5,48.4 1146.3,52.92 1138.5,57.45" fill="#fff" stroke="#2a2a2a" stroke-width="0.8" stroke-linejoin="round"/>
<rect x="1146.2" y="49.4" width="5.6" height="20.3" fill="#fff" stroke="#2a2a2a" stroke-width="1.2"/><path d="M1146.5 52.5 h3 M1146.5 55.3 h2 M1146.5 58.1 h3 M1146.5 60.9 h2 M1146.5 63.7 h3 M1146.5 66.5 h2" stroke="#2a2a2a" stroke-width="0.9"/>
<path d="M1175 51.1 H1192.9 V55.8 H1187 V69.9 H1180.9 V55.8 H1175 Z" fill="#2a2a2a"/>
<g transform="rotate(40 1228 58)"><path d="M1220.5 66.5 V57 A7.5 7.5 0 0 1 1235.5 57 V66.5 H1231.2 V57 A3.2 3.2 0 0 0 1224.8 57 V66.5 Z" fill="#f4f4f4" stroke="#2a2a2a" stroke-width="1"/><rect x="1220.5" y="62.6" width="4.3" height="3.9" fill="#2a2a2a"/><rect x="1231.2" y="62.6" width="4.3" height="3.9" fill="#2a2a2a"/></g>
<polygon points="1302.8,54.3 1313.5,48.9 1323.8,54 1323.8,63.8 1313.5,69.4 1302.8,63.8" fill="#fff" stroke="#2a2a2a" stroke-width="0.8"/><path d="M1302.8 56.6 L1313.5 62 M1302.8 58.9 L1313.5 64.4 M1302.8 61.3 L1313.5 66.9 M1302.8 63.6 L1313.5 69.2 M1302.8 54.3 L1313.5 59.6 L1323.8 54" stroke="#2a2a2a" stroke-width="1" fill="none"/><path d="M1313.7 63 L1319 55.6 M1313.7 67.5 L1322.5 55 M1315.8 68 L1323.8 56.8 M1319 66.4 L1323.8 60 M1313.7 69.2 V59.6" stroke="#2a2a2a" stroke-width="1" fill="none"/>
<path d="M1799 17.5 H1809" stroke="#000" stroke-width="1"/><path d="M1844.5 15.5 H1852.5 V23.5 H1844.5 Z M1846.5 15.5 V13.5 H1854.5 V21.5 H1852.5" fill="none" stroke="#000" stroke-width="1"/><path d="M1890 13 L1900 23 M1900 13 L1890 23" stroke="#000" stroke-width="1.1"/>
<rect x="1881.5" y="44.5" width="33" height="33.5" fill="url(#qb)" stroke="#a9a9a9" stroke-width="1"/>
<ellipse cx="1858" cy="176" rx="34" ry="16" fill="#000" opacity="0.07" filter="url(#b4)"/>
<polygon points="1859.7,106.9 1894.6,128.6 1854.9,148.2 1822.2,124.7" fill="#f4f4f4"/>
<polygon points="1822.2,124.7 1854.9,148.2 1854.9,186.5 1826.4,157.6" fill="url(#cubeL)"/>
<polygon points="1854.9,148.2 1894.6,128.6 1889.5,165.2 1854.9,186.5" fill="url(#cubeR)"/>
<path d="M1859.7 106.9 L1894.6 128.6 L1889.5 165.2 L1854.9 186.5 L1826.4 157.6 L1822.2 124.7 Z M1822.2 124.7 L1854.9 148.2 M1854.9 148.2 L1894.6 128.6 M1854.9 148.2 L1854.9 186.5" fill="none" stroke="#9a9a9a" stroke-width="0.8" stroke-dasharray="5 2"/>
<polygon points="1848,145.6 1854.9,140 1862.7,145.6 1862.2,152.4 1854.9,156.4 1848.6,152.4" fill="#a9dcf2"/>
<path d="M1848 145.6 L1854.9 148.8 L1862.7 145.6 M1854.9 148.8 V156.4" stroke="#c9ecf9" stroke-width="0.8" fill="none"/>
<text transform="matrix(0.87 -0.42 0.78 0.42 1865 131)" font-size="22" text-anchor="middle" fill="#222" font-family="Liberation Sans,Noto Sans CJK JP,sans-serif">上</text>
<text transform="matrix(0.80 0.62 0 1.0 1838.5 158)" font-size="20" text-anchor="middle" fill="#222" font-family="Liberation Sans,Noto Sans CJK JP,sans-serif">左</text>
<text transform="matrix(0.86 -0.40 0 1.0 1873 166)" font-size="21" text-anchor="middle" fill="#222" font-family="Liberation Sans,Noto Sans CJK JP,sans-serif">前</text>
<rect x="1853" y="210" width="36" height="387" fill="#f0f0f0" stroke="#c6c6c6" stroke-width="2"/>
<path d="M1871 222.5 V239.5 M1862.5 231 H1879.5" stroke="#2a2a2a" stroke-width="1.1"/><path d="M1871 220.8 l-2.1 3 h4.2z M1871 241.2 l-2.1 -3 h4.2z M1860.8 231 l3 -2.1 v4.2z M1881.2 231 l-3 -2.1 v4.2z" fill="#2a2a2a"/>
<polygon points="1865.2,263.86 1871,267.23 1871,273.1 1865.2,269.74" fill="#6a6a6a" stroke="#2a2a2a" stroke-width="0.8" stroke-linejoin="round"/>
<polygon points="1871,267.23 1876.8,263.86 1876.8,269.74 1871,273.1" fill="#2e2e2e" stroke="#2a2a2a" stroke-width="0.8" stroke-linejoin="round"/>
<polygon points="1865.2,263.86 1871,260.5 1876.8,263.86 1871,267.23" fill="#fff" stroke="#2a2a2a" stroke-width="0.8" stroke-linejoin="round"/>
<path d="M1873 256.5 A10 10 0 0 1 1879.6 271.5 M1869 276.3 A10 10 0 0 1 1862.3 261.5" fill="none" stroke="#2a2a2a" stroke-width="1.1"/><polygon points="1870.3,256.2 1874,254.4 1873.8,258.4" fill="#2a2a2a"/><polygon points="1871.8,276.6 1868.2,278.4 1868.3,274.4" fill="#2a2a2a"/>
<circle cx="1869.4" cy="298.8" r="6.6" fill="#fff" stroke="#2a2a2a" stroke-width="1.3"/><path d="M1874.3 303.8 L1879 308.4" stroke="#2a2a2a" stroke-width="3.4"/>
<rect x="1857" y="322.2" width="28" height="1" fill="url(#seph)"/>
<path d="M1861 339 V335.5 H1864.5 M1877.5 335.5 H1881 V339 M1881 351 V354.5 H1877.5 M1864.5 354.5 H1861 V351" fill="none" stroke="#2a2a2a" stroke-width="1.1"/>
<polygon points="1865.2,341.96 1871,345.33 1871,351.6 1865.2,348.24" fill="#6a6a6a" stroke="#2a2a2a" stroke-width="0.8" stroke-linejoin="round"/>
<polygon points="1871,345.33 1876.8,341.96 1876.8,348.24 1871,351.6" fill="#2e2e2e" stroke="#2a2a2a" stroke-width="0.8" stroke-linejoin="round"/>
<polygon points="1865.2,341.96 1871,338.6 1876.8,341.96 1871,345.33" fill="#fff" stroke="#2a2a2a" stroke-width="0.8" stroke-linejoin="round"/>
<circle cx="1875.3" cy="375.8" r="6" fill="#f8f8f8" stroke="#2a2a2a" stroke-width="0.9"/>
<polygon points="1860.4,378.41 1868,382.82 1868,390.8 1860.4,386.39" fill="#6a6a6a" stroke="#2a2a2a" stroke-width="0.8" stroke-linejoin="round"/>
<polygon points="1868,382.82 1875.6,378.41 1875.6,386.39 1868,390.8" fill="#2e2e2e" stroke="#2a2a2a" stroke-width="0.8" stroke-linejoin="round"/>
<polygon points="1860.4,378.41 1868,374 1875.6,378.41 1868,382.82" fill="#ddd" stroke="#2a2a2a" stroke-width="0.8" stroke-linejoin="round"/>
<path d="M1861.3 415 Q1871 405 1880.7 415 Q1871 425 1861.3 415 Z" fill="#fff" stroke="#2a2a2a" stroke-width="1.1"/><circle cx="1871" cy="414.8" r="3.6" fill="#555"/>
<path d="M1863.5 443.5 L1861 456 H1881.5 L1878.5 443.5 Z M1862.7 447.5 H1879.5 M1861.8 451.8 H1880.5 M1868.5 443.5 L1867.5 456 M1873.5 443.5 L1874.5 456" fill="none" stroke="#2a2a2a" stroke-width="1.1"/><path d="M1866.5 446.2 Q1874 438.6 1881.5 446.2 Q1874 453.6 1866.5 446.2 Z" fill="#fff" stroke="#2a2a2a" stroke-width="1"/><circle cx="1874" cy="446" r="2.8" fill="#666"/>
<path d="M1861.5 480 H1866.5 L1868 477.2 H1875.5 L1877 480 H1881.5 V493.5 H1861.5 Z" fill="#333"/><circle cx="1871" cy="486.6" r="4.6" fill="#333" stroke="#fff" stroke-width="1.5"/><rect x="1877.5" y="481.5" width="2" height="1.6" fill="#fff"/>
<rect x="1857" y="506.8" width="28" height="1" fill="url(#seph)"/>
<rect x="1860.2" y="521.2" width="1.6" height="1.6" fill="#2a2a2a"/>
<rect x="1860.2" y="538.2" width="1.6" height="1.6" fill="#2a2a2a"/>
<rect x="1880.7" y="538.2" width="1.6" height="1.6" fill="#2a2a2a"/>
<polygon points="1860.8,530.5 1870,526 1880.2,531 1880.2,537 1871.5,541.3 1860.8,536.2" fill="#333" stroke="#2a2a2a" stroke-width="0.7"/><polygon points="1860.8,530.5 1870,526 1876,528.9 1866.6,533.4" fill="#fff" stroke="#2a2a2a" stroke-width="0.7"/><polygon points="1872.2,530.8 1876,528.9 1880.2,531 1876.4,533" fill="#fff" stroke="#2a2a2a" stroke-width="0.7"/><polygon points="1860.8,530.5 1871.5,535.8 1871.5,541.3 1860.8,536.2" fill="#6a6a6a"/><g transform="rotate(35 1877 524)"><path d="M1872.2 529 V523 A4.8 4.8 0 0 1 1881.8 523 V529 H1879 V523 A2 2 0 0 0 1875 523 V529 Z" fill="#f4f4f4" stroke="#2a2a2a" stroke-width="0.9"/></g>
<g transform="rotate(40 1873 571)"><path d="M1865.5 580 V569 A7.5 7.5 0 0 1 1880.5 569 V580 H1876.5 V569 A3.5 3.5 0 0 0 1869.5 569 V580 Z" fill="#f4f4f4" stroke="#2a2a2a" stroke-width="1"/><rect x="1865.5" y="576" width="4" height="4" fill="#2a2a2a"/><rect x="1876.5" y="576" width="4" height="4" fill="#2a2a2a"/></g><path d="M1862 582.5 L1882.5 560.5" stroke="#2a2a2a" stroke-width="1.6"/><path d="M1861 568 Q1862 579 1871 581.5 L1881 581.5" fill="none" stroke="#2a2a2a" stroke-width="1" stroke-dasharray="1.2 1.2"/>
<polygon points="1859,562.36 1862.2,564.21 1862.2,567.5 1859,565.64" fill="#6a6a6a" stroke="#2a2a2a" stroke-width="0.5" stroke-linejoin="round"/>
<polygon points="1862.2,564.21 1865.4,562.36 1865.4,565.64 1862.2,567.5" fill="#2e2e2e" stroke="#2a2a2a" stroke-width="0.5" stroke-linejoin="round"/>
<polygon points="1859,562.36 1862.2,560.5 1865.4,562.36 1862.2,564.21" fill="#444" stroke="#2a2a2a" stroke-width="0.5" stroke-linejoin="round"/>
<polygon points="1913,588 1918,583 1918,593" fill="#fff"/>
<rect x="1920" y="994" width="8" height="1" fill="#e2e2e2"/><rect x="1915" y="1048" width="1" height="8" fill="#6a6a6a"/>
</svg>
<div class="abs" style="left:64px;top:42.6px;font-size:14.2px;color:#666;letter-spacing:-0.2px;transform:scaleX(0.88);transform-origin:0 0;line-height:16px;white-space:nowrap">AUTODESK<span style="font-size:6px;vertical-align:6px;letter-spacing:0">&#9679;</span></div>
<div class="abs" style="left:64px;top:57.6px;font-size:14.2px;font-weight:bold;color:#555;letter-spacing:0.15px;line-height:16px;white-space:nowrap">123D<span style="font-size:5px;vertical-align:7px">&#9679;</span> DESIGN</div>
<div class="abs btn" style="left:1654px;top:44px;width:136px;height:35px"><div style="font-size:11.5px;line-height:13px;margin-top:4px;letter-spacing:-0.3px">プレミアム版登録</div><div style="font-size:8.5px;line-height:10px;margin-top:5px;font-weight:normal">(商業利用向け)</div></div>
<div class="abs btn" style="left:1796px;top:44px;width:79px;height:35px;font-size:11.5px;line-height:35px;font-weight:normal;letter-spacing:-1px">サインイン</div>
<div class="abs" style="left:1882px;top:45px;width:32px;height:33px;text-align:center;font-size:20px;line-height:33px;color:#333">?</div>
<div class="abs" style="left:1741px;top:968px;width:155px;height:22px;background:#c8c8c8;text-align:center;font-size:12.5px;font-weight:bold;line-height:22px;color:#111;letter-spacing:-0.8px">グリッドを編集</div>
<div class="abs" style="left:1741px;top:995px;width:75px;height:22px;box-sizing:border-box;border:2px solid #c6c6c6;background:#fff;text-align:center;font-size:13px;line-height:19px;color:#111;font-weight:bold">1</div>
<div class="abs" style="left:1821px;top:995px;width:75px;height:22px;box-sizing:border-box;border:2px solid #c6c6c6;background:#fff;text-align:center;font-size:13px;line-height:19px;color:#111;font-weight:bold">1</div>
<div class="abs" style="left:1741px;top:1022px;width:75px;text-align:center;font-size:8.5px;font-weight:bold;line-height:12px;color:#111;letter-spacing:-0.6px;white-space:nowrap">長さスナップ</div>
<div class="abs" style="left:1821px;top:1022px;width:75px;text-align:center;font-size:8.5px;font-weight:bold;line-height:12px;color:#111;letter-spacing:-0.6px;white-space:nowrap">角度スナップ</div>
<div class="abs" style="left:1818px;top:1053.6px;font-size:12px;line-height:12px;color:#fff;height:3px;overflow:hidden;white-space:nowrap">22:33</div>
</body></html>
